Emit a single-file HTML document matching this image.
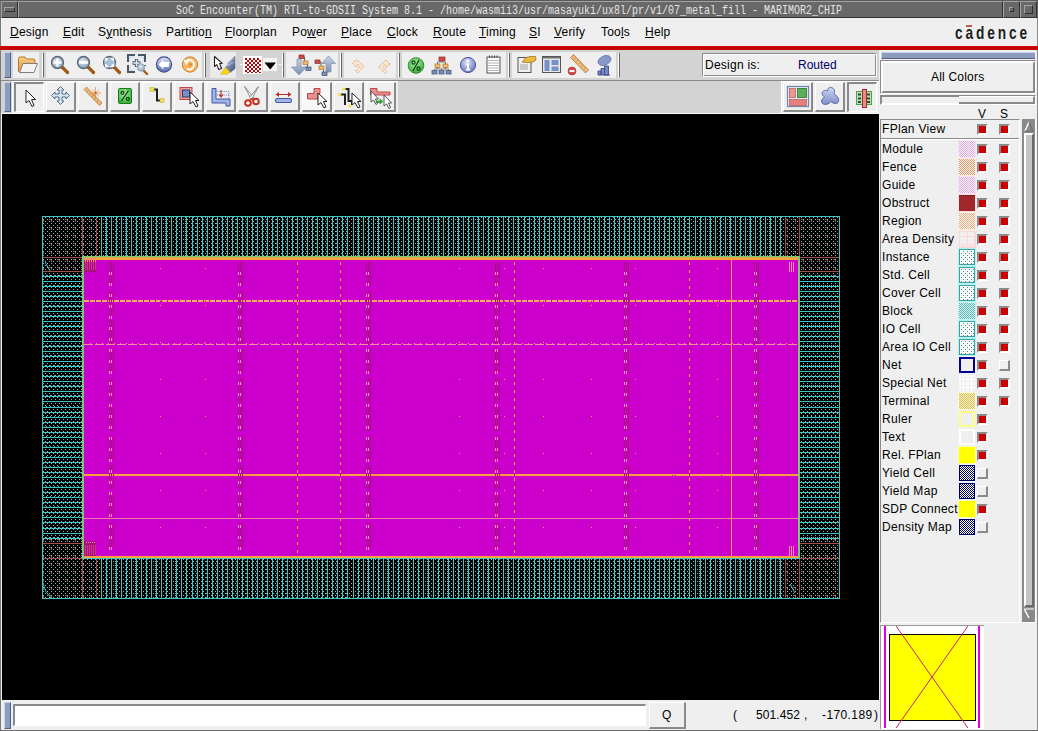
<!DOCTYPE html>
<html><head><meta charset="utf-8">
<style>
*{margin:0;padding:0;box-sizing:border-box}
html,body{width:1038px;height:731px;overflow:hidden;background:#efefef;font-family:"Liberation Sans",sans-serif;}
.a{position:absolute}
#title{left:0;top:0;width:1038px;height:18px;background:#686868;border-top:1px solid #5a5a5a;border-left:1px solid #6a6a6a;}
#ttext{left:176px;top:3px;font-family:"Liberation Mono",monospace;font-size:13px;color:#e4e4e4;white-space:pre;line-height:16px;transform:scaleX(0.7692);transform-origin:0 0}
.menu{top:25px;font-size:12px;color:#000;line-height:14px;white-space:pre;letter-spacing:0.2px}
.menu u{text-decoration:underline;text-decoration-thickness:1px;text-underline-offset:1px}
#red{left:0;top:46px;width:1038px;height:4px;background:#cc0000;border-bottom:1px solid #b80000}
.tbgray{background:#d3d3d3}
.grp{background:#efefef}
.handle{background:#8c9cbf;border-right:1px solid #55607a;border-bottom:1px solid #55607a;border-left:1px solid #c8d4ee;border-top:1px solid #c8d4ee}
.sep{width:2px;border-left:1px solid #fff;border-right:1px solid #666}
.btn{width:30px;height:30px;border-top:1px solid #fff;border-left:1px solid #fff;border-right:2px solid #8a8a8a;border-bottom:2px solid #8a8a8a;background:#efefef}
.btnp{width:30px;height:30px;border-top:2px solid #8a8a8a;border-left:2px solid #8a8a8a;border-right:1px solid #fff;border-bottom:1px solid #fff;background:#efefef}
.lst{font-size:12px;color:#000;white-space:pre;line-height:14px;letter-spacing:0.3px}
.sw{width:16px;height:15px}
.cb{width:11px;height:11px;border-top:2px solid #8a8a8a;border-left:2px solid #8a8a8a;border-right:2px solid #fff;border-bottom:2px solid #fff;background:#cc0000}
.cbo{width:11px;height:11px;border-top:1px solid #fff;border-left:1px solid #fff;border-right:2px solid #8a8a8a;border-bottom:2px solid #8a8a8a;background:#efefef}

.mod{background:repeating-conic-gradient(#f8e4f8 0 25%,#e8c4e8 0 50%) 0 0/2px 2px;box-shadow:inset 0 0 0 1px #f0d0f0}
.fen{background:repeating-conic-gradient(#f4d0b4 0 25%,#e0b090 0 50%) 0 0/2px 2px;box-shadow:inset 0 0 0 1px #f0c8a8}
.obs{background:#a0282a}
.reg{background:repeating-conic-gradient(#f8dcc4 0 25%,#e8c0a0 0 50%) 0 0/2px 2px}
.ad{background:#f4eaea;box-shadow:inset 0 0 0 1px #f0d0d0}
.inst{background:#eafafa;border:1px solid #40b4b4}
.blk{background:#a8dede;border:1px solid #60c0c0}
.net{background:#efefef;border:2px solid #000090;box-shadow:0 0 0 1px #f4f4ff}
.sn{background:#f8f8f8}
.term{background:repeating-conic-gradient(#f0e4a0 0 25%,#e0cc70 0 50%) 0 0/2px 2px}
.rul{background:#efefef;border:2px solid #ffff80}
.txt{background:#efefef;border:2px solid #fff}
.yel{background:#ffff00}
.nav{background:repeating-conic-gradient(#000070 0 25%,#e0e0ff 0 50%) 0 0/2px 2px;border:1px solid #000060}
</style></head><body>
<!-- frame -->
<div class="a" style="left:0;top:0;width:1px;height:731px;background:#7a7a7a"></div>
<div class="a" style="left:1037px;top:0;width:1px;height:731px;background:#8a8a8a"></div>
<div class="a" style="left:0;top:730px;width:1038px;height:1px;background:#6a6a6a"></div>

<!-- title bar -->
<div id="title" class="a"></div>
<div class="a" style="left:1px;top:1px;width:17px;height:17px;border-top:1px solid #a4a4a4;border-left:1px solid #a4a4a4;border-right:1px solid #303030;border-bottom:1px solid #303030"></div>
<div class="a" style="left:4px;top:7px;width:11px;height:5px;border:1px solid #a4a4a4;border-right-color:#303030;border-bottom-color:#303030"></div>
<div class="a" style="left:18px;top:1px;width:985px;height:17px;border-top:1px solid #a4a4a4;border-left:1px solid #a4a4a4;border-right:1px solid #303030;border-bottom:1px solid #303030"></div>
<div class="a" style="left:1003px;top:1px;width:17px;height:17px;border-top:1px solid #a4a4a4;border-left:1px solid #a4a4a4;border-right:1px solid #303030;border-bottom:1px solid #303030"></div>
<div class="a" style="left:1009px;top:7px;width:5px;height:5px;border:1px solid #a4a4a4;border-right-color:#303030;border-bottom-color:#303030"></div>
<div class="a" style="left:1020px;top:1px;width:17px;height:17px;border-top:1px solid #a4a4a4;border-left:1px solid #a4a4a4;border-right:1px solid #303030;border-bottom:1px solid #303030"></div>
<div class="a" style="left:1024px;top:5px;width:9px;height:9px;border:1px solid #a4a4a4;border-right-color:#303030;border-bottom-color:#303030"></div>
<div id="ttext" class="a">SoC Encounter(TM) RTL-to-GDSII System 8.1 - /home/wasmii3/usr/masayuki/ux8l/pr/v1/07_metal_fill - MARIMOR2_CHIP</div>

<!-- menu -->
<div class="a menu" style="left:10px"><u>D</u>esign</div>
<div class="a menu" style="left:63px"><u>E</u>dit</div>
<div class="a menu" style="left:98px">S<u>y</u>nthesis</div>
<div class="a menu" style="left:166px">Partitio<u>n</u></div>
<div class="a menu" style="left:225px"><u>F</u>loorplan</div>
<div class="a menu" style="left:292px">Po<u>w</u>er</div>
<div class="a menu" style="left:341px"><u>P</u>lace</div>
<div class="a menu" style="left:387px"><u>C</u>lock</div>
<div class="a menu" style="left:433px"><u>R</u>oute</div>
<div class="a menu" style="left:479px"><u>T</u>iming</div>
<div class="a menu" style="left:529px"><u>S</u>I</div>
<div class="a menu" style="left:554px"><u>V</u>erify</div>
<div class="a menu" style="left:601px">Too<u>l</u>s</div>
<div class="a menu" style="left:645px"><u>H</u>elp</div>
<div class="a" style="left:955px;top:23px;font-size:19px;font-weight:bold;color:#1e1e1e;letter-spacing:4px;line-height:20px;transform:scaleX(0.72);transform-origin:0 0;white-space:pre">cadence</div>
<div class="a" style="left:966px;top:25px;width:6px;height:2px;background:#c05858"></div>

<div id="red" class="a"></div>

<!-- toolbars -->
<div class="a tbgray" style="left:1px;top:50px;width:878px;height:64px"></div>
<div class="a" style="left:1px;top:80px;width:878px;height:1px;background:#8a8a8a"></div>
<div class="a" style="left:1px;top:113px;width:878px;height:1px;background:#fafafa"></div>
<div class="a grp" style="left:13px;top:52px;width:27px;height:26px;border-right:1px solid #d8d8d8"></div>
<div class="a grp" style="left:46px;top:52px;width:156px;height:26px"></div>
<div class="a grp" style="left:210px;top:52px;width:26px;height:26px;background:#ebebeb"></div>
<div class="a grp" style="left:286px;top:52px;width:52px;height:26px"></div>
<div class="a grp" style="left:344px;top:52px;width:52px;height:26px"></div>
<div class="a grp" style="left:402px;top:52px;width:104px;height:26px"></div>
<div class="a grp" style="left:512px;top:52px;width:104px;height:26px"></div>
<div class="a handle" style="left:4px;top:52px;width:7px;height:26px"></div>
<div class="a handle" style="left:4px;top:82px;width:7px;height:30px"></div>
<div class="a sep" style="left:42px;top:53px;height:24px"></div>
<div class="a sep" style="left:204px;top:53px;height:24px"></div>
<div class="a sep" style="left:282px;top:53px;height:24px"></div>
<div class="a sep" style="left:340px;top:53px;height:24px"></div>
<div class="a sep" style="left:398px;top:53px;height:24px"></div>
<div class="a sep" style="left:508px;top:53px;height:24px"></div>
<div class="a sep" style="left:618px;top:53px;height:24px"></div>
<!-- row2 buttons -->
<div class="a" style="left:12px;top:81px;width:386px;height:32px;background:#efefef;border-top:1px solid #fff;border-left:1px solid #fff"></div>
<div class="a" style="left:781px;top:81px;width:98px;height:32px;background:#efefef;border-top:1px solid #fff;border-left:1px solid #fff"></div>
<div class="a btnp" style="left:14px;top:82px"></div>
<div class="a btn" style="left:46px;top:82px"></div>
<div class="a btn" style="left:78px;top:82px"></div>
<div class="a btn" style="left:110px;top:82px"></div>
<div class="a btn" style="left:142px;top:82px"></div>
<div class="a btn" style="left:174px;top:82px"></div>
<div class="a btn" style="left:206px;top:82px"></div>
<div class="a btn" style="left:238px;top:82px"></div>
<div class="a btn" style="left:270px;top:82px"></div>
<div class="a btn" style="left:302px;top:82px;background:#f8f8f8"></div>
<div class="a btn" style="left:334px;top:82px"></div>
<div class="a btn" style="left:366px;top:82px"></div>
<div class="a btn" style="left:783px;top:82px"></div>
<div class="a btn" style="left:815px;top:82px"></div>
<div class="a btnp" style="left:847px;top:82px"></div>

<svg class="a" style="left:0;top:49px" width="880" height="65" viewBox="0 49 880 65">
<defs>
<linearGradient id="gfold" x1="0" y1="0" x2="0" y2="1"><stop offset="0" stop-color="#f8d088"/><stop offset="1" stop-color="#e09838"/></linearGradient>
<radialGradient id="glens" cx="0.45" cy="0.4" r="0.6"><stop offset="0" stop-color="#e8f0f8"/><stop offset="1" stop-color="#8098b0"/></radialGradient>
<linearGradient id="gblue" x1="0" y1="0" x2="0" y2="1"><stop offset="0" stop-color="#d8e0f4"/><stop offset="1" stop-color="#5870b0"/></linearGradient>
<radialGradient id="gorg" cx="0.5" cy="0.4" r="0.6"><stop offset="0" stop-color="#ffe0a8"/><stop offset="1" stop-color="#e88a20"/></radialGradient>
<radialGradient id="ggrn" cx="0.45" cy="0.35" r="0.7"><stop offset="0" stop-color="#a8f0a8"/><stop offset="1" stop-color="#30a830"/></radialGradient>
<radialGradient id="ginfo" cx="0.45" cy="0.35" r="0.65"><stop offset="0" stop-color="#e0e4f8"/><stop offset="1" stop-color="#6878c0"/></radialGradient>
<linearGradient id="garr" x1="0" y1="0" x2="0" y2="1"><stop offset="0" stop-color="#c8d4e4"/><stop offset="1" stop-color="#7890b0"/></linearGradient>
<pattern id="chk" width="4" height="4" patternUnits="userSpaceOnUse" x="245" y="58"><rect width="4" height="4" fill="#fff"/><rect width="2" height="2" fill="#c00000"/><rect x="2" y="2" width="2" height="2" fill="#c00000"/></pattern>
</defs>
<!-- folder -->
<path d="M18.5 72 L18.5 58.5 Q18.5 57 20 57 L25 57 L26.5 59 L33 59 Q35 59 35 61 L35 64" fill="url(#gfold)" stroke="#b87828" stroke-width="1"/>
<path d="M19.5 72.5 L23 63.5 L37.5 63.5 L34 72.5 Z" fill="#f4f4f4" stroke="#808080" stroke-width="1"/>
<!-- zoom in/out/fit -->
<g stroke-linecap="round">
<path d="M62 67 L67.5 72.5" stroke="#a05a18" stroke-width="3.2"/>
<circle cx="57.5" cy="62.5" r="6" fill="url(#glens)" stroke="#5a6878" stroke-width="1.3"/>
<path d="M57.5 58.5 V66.5 M53.5 62.5 H61.5" stroke="#fff" stroke-width="2.6" stroke-linecap="butt"/>
<path d="M88 67 L93.5 72.5" stroke="#a05a18" stroke-width="3.2"/>
<circle cx="83.5" cy="62.5" r="6" fill="url(#glens)" stroke="#5a6878" stroke-width="1.3"/>
<path d="M79 62.5 H88" stroke="#fff" stroke-width="2.6" stroke-linecap="butt"/>
<path d="M114 67 L119.5 72.5" stroke="#a05a18" stroke-width="3.2"/>
<circle cx="109.5" cy="62.5" r="6" fill="#a8c0d8" stroke="#5a6878" stroke-width="1.3"/>
<path d="M105.5 58.5 l2.5 0 l-2.5 2.5 Z M113.5 58.5 l0 2.5 l-2.5 -2.5 Z M105.5 66.5 l0 -2.5 l2.5 2.5 Z M113.5 66.5 l-2.5 0 l2.5 -2.5 Z" fill="#fff" stroke="#fff" stroke-width="1"/>
</g>
<!-- zoom select -->
<path d="M128 62 V55 H135 M138 55 H145 V62 M128 65 V72 H135 M145 65 V66" fill="none" stroke="#485868" stroke-width="2"/>
<path d="M130 62 V57 H135 M138 57 H143 V62 M130 65 V70 H135" fill="none" stroke="#c8d8f0" stroke-width="1"/>
<path d="M136.5 59 V67 M132.5 63 H140.5" stroke="#485868" stroke-width="3.4"/>
<path d="M136.5 59.8 V66.2 M133.3 63 H139.7" stroke="#e8f0f8" stroke-width="1.4"/>
<path d="M143 70 L147 74" stroke="#a05a18" stroke-width="2.4" stroke-linecap="round"/>
<circle cx="141" cy="67.5" r="3.8" fill="url(#glens)" stroke="#90a8c0" stroke-width="0.6"/>
<!-- back -->
<circle cx="164" cy="64.5" r="7.6" fill="url(#gblue)" stroke="#40508a" stroke-width="1.2"/>
<path d="M158.5 64.5 L163.5 59.5 V62 H169 V67 H163.5 V69.5 Z" fill="#fff"/>
<!-- refresh -->
<circle cx="190" cy="64.5" r="7.6" fill="#f4b060" stroke="#d07820" stroke-width="1"/>
<circle cx="190" cy="64.5" r="6.2" fill="none" stroke="#f8c880" stroke-width="1"/>
<path d="M186.5 61 A4.6 4.6 0 1 1 186.8 68.5" fill="none" stroke="#fff8e8" stroke-width="2"/>
<path d="M183.5 59.5 L189.5 61 L186 65.5 Z" fill="#fff8e8"/>
<circle cx="190.5" cy="64.5" r="1.5" fill="#e09038"/>
<!-- select+pen group -->
<linearGradient id="gpen" x1="0" y1="0" x2="1" y2="1"><stop offset="0" stop-color="#b0c0e8"/><stop offset="1" stop-color="#404c78"/></linearGradient>
<path d="M214.5 56.5 L214.5 66.5 L216.8 64.6 L218.8 69.6 L221.6 68.5 L219.6 63.6 L222.3 63.3 Z" fill="#fff" stroke="#222" stroke-width="1.1" stroke-linejoin="round"/>
<path d="M234.8 56.3 L235 68.6 L230.3 72.3 L225.3 67.6 L228.3 64.3 L228 63.3 Z" fill="url(#gpen)" stroke="#4a5680" stroke-width="0.6"/><path d="M228.5 63.5 L234.5 57 M227 66 L234 62" stroke="#d0dcf8" stroke-width="0.7"/>
<path d="M225.3 67.6 L230.3 72.3 L226.8 74.2 L220.3 74.3 Z" fill="#f4d418" stroke="#d8a810" stroke-width="0.5"/>
<rect x="240" y="64" width="2" height="1" fill="#fff"/><rect x="279" y="64" width="2" height="1" fill="#fff"/>
<rect x="243" y="56" width="19" height="18" fill="#fff"/>
<rect x="245" y="58" width="16" height="15" fill="url(#chk)"/>
<rect x="263" y="58" width="14" height="13" fill="#f4f4f4"/>
<path d="M264.5 62.5 H276 L270.2 69.5 Z" fill="#000"/>
<!-- push down / up -->
<path d="M297 59 H301 V67 H306.5 L299 75 L291.5 67 H297 Z" fill="url(#garr)" stroke="#8898b0" stroke-width="0.8"/>
<path d="M301.5 57 H304.5 V62.5 H307.5 V68 H309" fill="none" stroke="#505860" stroke-width="0.9"/>
<rect x="299" y="55" width="5" height="3.5" fill="#d04848" stroke="#903030" stroke-width="0.7"/>
<rect x="303" y="61" width="5" height="3.5" fill="#f4b868" stroke="#a87838" stroke-width="0.7"/>
<rect x="306" y="67" width="5" height="3.5" fill="#7890b8" stroke="#405070" stroke-width="0.7"/>
<path d="M326 72 V63.5 H321.5 L328.5 56 L335.5 63.5 H331 V72 Z" fill="url(#garr)" stroke="#8898b0" stroke-width="0.8"/>
<path d="M319 62 H321 V67.5 H323.5 V74" fill="none" stroke="#505860" stroke-width="0.9"/>
<rect x="315" y="60" width="5" height="3.5" fill="#d04848" stroke="#903030" stroke-width="0.7"/>
<rect x="319" y="66" width="5" height="3.5" fill="#f4b868" stroke="#a87838" stroke-width="0.7"/>
<rect x="322" y="72" width="5" height="3.5" fill="#7890b8" stroke="#405070" stroke-width="0.7"/>
<!-- undo redo disabled -->
<pattern id="stip" width="2" height="2" patternUnits="userSpaceOnUse"><rect width="2" height="2" fill="#fbe4c8"/><rect width="1" height="1" fill="#c89868"/></pattern>
<path d="M352.5 63.5 L356.5 59.5 L364 66.5 L357.5 73 L355.5 71 L360 66.5 L357.5 64 L356.5 67.5 Z" fill="#fde6cc" stroke="#c89060" stroke-width="0.9" stroke-dasharray="1 1"/>
<path d="M390 64 L386 60 L378.5 67 L385 73.5 L387 71.5 L382.5 67 L385 64.5 L386 68 Z" fill="#fde6cc" stroke="#c89060" stroke-width="0.9" stroke-dasharray="1 1"/>
<!-- green percent -->
<circle cx="416" cy="65.5" r="7.8" fill="url(#ggrn)" stroke="#1a7a1a" stroke-width="0.8"/>
<circle cx="413.5" cy="62.5" r="1.6" fill="none" stroke="#104010" stroke-width="1.2"/>
<circle cx="418.5" cy="68.5" r="1.6" fill="none" stroke="#104010" stroke-width="1.2"/>
<path d="M419 60 L413 71" stroke="#104010" stroke-width="1.3"/>
<!-- hierarchy -->
<path d="M442 59 V62 H437.5 V65 M442 62 H445.5 V65 M437.5 67 V69 H434.5 V71 M437.5 69 H441.5 V71 M445.5 67 V69 H448.5 V71 M445.5 69 H441.5" fill="none" stroke="#707070" stroke-width="0.9"/>
<rect x="439" y="57" width="6" height="4" fill="#d04848" stroke="#903030" stroke-width="0.7"/>
<rect x="435" y="64" width="5" height="3.5" fill="#f4b868" stroke="#a87838" stroke-width="0.7"/>
<rect x="443" y="64" width="5" height="3.5" fill="#f4b868" stroke="#a87838" stroke-width="0.7"/>
<rect x="432" y="70.5" width="5" height="3.5" fill="#7890b8" stroke="#405070" stroke-width="0.7"/>
<rect x="439" y="70.5" width="5" height="3.5" fill="#7890b8" stroke="#405070" stroke-width="0.7"/>
<rect x="446" y="70.5" width="5" height="3.5" fill="#7890b8" stroke="#405070" stroke-width="0.7"/>
<!-- info -->
<circle cx="468" cy="65" r="7.6" fill="url(#ginfo)" stroke="#4858a0" stroke-width="1"/>
<circle cx="468" cy="60.8" r="1.3" fill="#fff"/>
<path d="M466 63.5 H469 V69 H470.3 V70.5 H465.8 V69 H467 V65 H466 Z" fill="#fff"/>
<!-- notepad -->
<rect x="487" y="57" width="13" height="16" fill="#fff" stroke="#555" stroke-width="1"/>
<path d="M488 60.5 H499 M488 63 H499 M488 65.5 H499 M488 68 H499 M488 70.5 H499" stroke="#a0a0a0" stroke-width="0.8"/>
<path d="M489.5 55.5 V58 M492 55.5 V58 M494.5 55.5 V58 M497 55.5 V58" stroke="#555" stroke-width="1"/>
<!-- doc edit -->
<rect x="518" y="57.5" width="13" height="15" fill="#f0f0f0" stroke="#555" stroke-width="1"/>
<path d="M520 65 H528 M520 67 H528 M520 69 H528" stroke="#909090" stroke-width="0.8"/>
<path d="M522 62 L526 57.5 L530 56.5 L535.5 56.5 L536 60 L533 62 L527 62.5 Z" fill="#e8b840" stroke="#a87818" stroke-width="0.8"/>
<!-- layout window -->
<rect x="542.5" y="56.5" width="18" height="16" fill="#e8e8e8" stroke="#555" stroke-width="1"/>
<rect x="543" y="57" width="17" height="1.5" fill="#707070"/>
<rect x="544.5" y="60" width="5" height="11" fill="#7890c8"/>
<rect x="551.5" y="60" width="7" height="5" fill="#7890c8"/>
<rect x="551.5" y="66.5" width="7" height="4.5" fill="#7890c8"/>
<!-- ruler remove -->
<path d="M570.5 57.5 L573.5 54.5 L588.5 70 L585.5 73 Z" fill="#e8b878" stroke="#b87838" stroke-width="0.8"/>
<path d="M574 59 L575.5 57.5 M576.5 61.5 L578 60 M579 64 L580.5 62.5 M581.5 66.5 L583 65 M584 69 L585.5 67.5" stroke="#b87838" stroke-width="0.7"/>
<circle cx="572" cy="71" r="4" fill="#d04848" stroke="#a83030" stroke-width="0.6"/>
<rect x="569.5" y="70" width="5" height="2" fill="#fff"/>
<!-- blob chart -->
<ellipse cx="604.5" cy="60.5" rx="6.8" ry="4.5" transform="rotate(-25 604.5 60.5)" fill="#8898c8" stroke="#6070a8" stroke-width="0.8"/>
<path d="M598 75 V71 H601 V75 M601 75 V68.5 H604.5 V75 M604.5 75 V66 H608.5 V75 Z" fill="#7888c0" stroke="#405090" stroke-width="0.9"/>
<rect x="598" y="74.5" width="12" height="1" fill="#405090"/>

<!-- ROW 2 -->
<path d="M26 90 L26 103 L29 100.5 L32 106.5 L34 105.5 L31.5 99.5 L35.5 99.5 Z" fill="#fff" stroke="#222" stroke-width="1" stroke-linejoin="round"/>
<!-- move -->
<path d="M60.5 86.5 L64 90 H62 V94 H66 V92 L69.5 95.5 L66 99 V97 H62 V101 H64 L60.5 104.5 L57 101 H59 V97 H55 V99 L51.5 95.5 L55 92 V94 H59 V90 H57 Z" fill="#d8e4f0" stroke="#50708e" stroke-width="1"/>
<!-- ruler sparkle -->
<path d="M84 89.5 L86.5 87 L102 103 L99.5 105.5 Z" fill="#e8b878" stroke="#c08040" stroke-width="0.8"/>
<path d="M87 92 L88.5 90.5 M89.5 94.5 L91 93 M92 97 L93.5 95.5 M94.5 99.5 L96 98 M97 102 L98.5 100.5" stroke="#c08040" stroke-width="0.7"/>
<path d="M95.5 87 V98 M90.5 93 H101 M92 89.5 L99 96.5 M99 89.5 L92 96.5" stroke="#e07020" stroke-width="0.6"/>
<circle cx="95.5" cy="93" r="1.3" fill="#e07020"/>
<!-- green % -->
<rect x="118.5" y="88.5" width="13" height="15" rx="1.2" fill="url(#ggrn)" stroke="#1a7a1a" stroke-width="1"/>
<circle cx="122.5" cy="92.8" r="1.5" fill="none" stroke="#104010" stroke-width="1.2"/>
<circle cx="127.8" cy="98.8" r="1.5" fill="none" stroke="#104010" stroke-width="1.2"/>
<path d="M128.5 90.5 L121.5 101" stroke="#104010" stroke-width="1.3"/>
<!-- wire -->
<path d="M152 89.5 H157 V100.5 H162" fill="none" stroke="#202020" stroke-width="2"/>
<rect x="150" y="87.5" width="4" height="4" fill="#f0e060" stroke="#c8b830" stroke-width="0.6"/>
<rect x="160" y="98.5" width="4" height="4" fill="#f0e060" stroke="#c8b830" stroke-width="0.6"/>
<!-- box select -->
<rect x="180" y="87.5" width="12" height="12" fill="#f0a0a0" stroke="#c04848" stroke-width="1"/>
<rect x="182.5" y="90" width="7" height="7" fill="#7890c8" stroke="#303868" stroke-width="1"/>
<path d="M190 92 L190 104 L193 101.5 L196 107 L198 106 L195.5 100.5 L199 100.5 Z" fill="#fff" stroke="#222" stroke-width="1" stroke-linejoin="round"/>
<!-- floorplan icon -->
<path d="M212 88.5 H216 V99 H230 V106 H226 V103 H212 Z" fill="#a0b4e8" stroke="#4058a0" stroke-width="1"/>
<path d="M217 91.5 H229 V99 M217 95 H229" fill="none" stroke="#6078b8" stroke-width="0.8" stroke-dasharray="1.2 1"/>
<path d="M221 90 V96 M219 94.5 L221 97 L223 94.5" fill="none" stroke="#c03030" stroke-width="1.2"/>
<!-- scissors -->
<path d="M244.5 86.5 L253.5 97.5 L251.5 99.5 Z" fill="#fff" stroke="#808080" stroke-width="0.9" stroke-linejoin="round"/>
<path d="M258.5 86.5 L249.5 97.5 L251.5 99.5 Z" fill="#fff" stroke="#808080" stroke-width="0.9" stroke-linejoin="round"/>
<circle cx="248" cy="103" r="2.8" fill="#fff" stroke="#c83020" stroke-width="2"/>
<circle cx="256" cy="101.5" r="2.8" fill="#fff" stroke="#c83020" stroke-width="2"/>
<path d="M250 100.5 L252 98.5 M254 100 L252 98.5" stroke="#c83020" stroke-width="1.6"/>
<!-- stretch -->
<path d="M278 94.5 H289" stroke="#b03030" stroke-width="1"/><path d="M279 92 L275.5 94.5 L279 97 Z M288 92 L291.5 94.5 L288 97 Z" fill="#b03030"/>
<rect x="275.5" y="98.5" width="16" height="4" rx="1.5" fill="#a0b4e8" stroke="#4058a0" stroke-width="1"/>
<!-- red L + cursor -->
<path d="M314 88.5 H320 V93.5 H318 V99 H307.5 V93.5 H314 Z" fill="#e89090" stroke="#c04848" stroke-width="1"/>
<path d="M318 93 L318 105 L321 102.5 L324 108 L326 107 L323.5 101.5 L327 101.5 Z" fill="#fff" stroke="#222" stroke-width="1" stroke-linejoin="round"/>
<!-- wire select -->
<path d="M344.5 89 H348.5 V101 H352 V105" fill="none" stroke="#202020" stroke-width="2"/>
<path d="M340.5 94.5 H345 V105" fill="none" stroke="#202020" stroke-width="2"/>
<circle cx="344" cy="89" r="1.8" fill="#f0e060"/><circle cx="339.5" cy="94.5" r="1.8" fill="#f0e060"/><circle cx="350" cy="106" r="1.8" fill="#f0e060"/>
<path d="M352 93 L352 105 L355 102.5 L358 108 L360 107 L357.5 101.5 L361 101.5 Z" fill="#fff" stroke="#222" stroke-width="1" stroke-linejoin="round"/>
<!-- copy select -->
<path d="M370.5 88.5 H377 V92 H390 V95 H370.5 Z" fill="#e89090" stroke="#c04848" stroke-width="1"/>
<path d="M371 91 L371 102 L373.5 100 L376 104.5 L377.5 103.5 L375.5 99 L378.5 99 Z" fill="#fff" stroke="#444" stroke-width="0.9" stroke-linejoin="round"/>
<path d="M384 95 L384 106 L386.5 104 L389 108.5 L390.5 107.5 L388.5 103 L391.5 103 Z" fill="#fff" stroke="#444" stroke-width="0.9" stroke-linejoin="round"/>
<path d="M376 101 H380 V99 L383 101.5 L380 104 V102.5 H376 Z" fill="#30b030" stroke="#208020" stroke-width="0.5"/>
<!-- right buttons -->
<rect x="787.5" y="86.5" width="21" height="20" fill="#e8eef8" stroke="#7088b0" stroke-width="1.2"/>
<rect x="789.5" y="88.5" width="6" height="9" fill="#e89898" stroke="#c06060" stroke-width="0.8"/>
<rect x="797.5" y="88.5" width="9" height="9" fill="#58b058" stroke="#307030" stroke-width="0.8"/>
<rect x="789.5" y="99.5" width="17" height="6" fill="#e88080" stroke="#c06060" stroke-width="0.8"/>
<linearGradient id="gblob" x1="0" y1="0" x2="0" y2="1"><stop offset="0" stop-color="#d0d8f4"/><stop offset="1" stop-color="#7c8cc8"/></linearGradient>
<path d="M830.5 87.5 C834 87.5 835.5 90.5 834 93.5 C836 95.5 839.5 98 838.5 101.5 C837.5 104.5 833.5 104 831 101.5 C829 104 825 105.5 822.5 103.5 C820.5 101.5 822 98.5 824.5 97 C822 95.5 821 92.5 823.5 91 C825 90 826.5 90.5 827.5 91 C827.5 89 828.5 87.5 830.5 87.5 Z" fill="url(#gblob)" stroke="#5a6aa8" stroke-width="1"/>
<rect x="856.5" y="91.5" width="15" height="13" fill="#b8e0b8" stroke="#50a050" stroke-width="1"/>
<rect x="858" y="93.5" width="3" height="2" fill="#305030"/><rect x="858" y="97.5" width="3" height="2" fill="#305030"/><rect x="858" y="101" width="3" height="2" fill="#305030"/>
<rect x="867" y="93.5" width="3" height="2" fill="#305030"/><rect x="867" y="97.5" width="3" height="2" fill="#305030"/><rect x="867" y="101" width="3" height="2" fill="#305030"/>
<rect x="862.5" y="89.5" width="4" height="18" fill="#f08888" stroke="#a03030" stroke-width="1"/>
</svg>

<!-- design is -->
<div class="a" style="left:702px;top:53px;width:175px;height:24px;border-top:1px solid #8a8a8a;border-left:1px solid #8a8a8a;border-right:1px solid #fff;border-bottom:1px solid #fff;box-shadow:inset 1px 1px 0 #fff,inset -1px -1px 0 #8a8a8a;background:#efefef"></div>
<div class="a" style="left:705px;top:58px;font-size:12px;line-height:14px;letter-spacing:0.25px">Design is:</div>
<div class="a" style="left:798px;top:58px;font-size:12px;line-height:14px;color:#000068">Routed</div>

<!-- canvas -->
<svg class="a" style="left:2px;top:114px" width="877" height="586" viewBox="2 114 877 586" shape-rendering="crispEdges">
<defs>
<pattern id="dots" width="4" height="4" patternUnits="userSpaceOnUse"><rect x="1" y="1" width="1" height="1" fill="#90b8bc"/><rect x="3" y="3" width="1" height="1" fill="#90b8bc"/></pattern>
<pattern id="bmk" width="8" height="8" patternUnits="userSpaceOnUse"><rect x="1" y="3" width="2" height="1" fill="#8a5a50"/><rect x="3" y="4" width="1" height="2" fill="#8a5a50"/></pattern>
<pattern id="vio" width="10" height="4" patternUnits="userSpaceOnUse"><rect x="1" y="0" width="1" height="4" fill="#40c4c4"/><rect x="6" y="0" width="1" height="4" fill="#40c4c4"/><rect x="5" y="3" width="1" height="1" fill="#40c4c4"/></pattern>
<pattern id="hio" width="4" height="10" patternUnits="userSpaceOnUse"><rect x="0" y="1" width="4" height="1" fill="#40c4c4"/><rect x="0" y="6" width="4" height="1" fill="#40c4c4"/><rect x="3" y="5" width="1" height="1" fill="#40c4c4"/></pattern>
</defs>
<rect x="2" y="114" width="877" height="586" fill="#000"/>
<rect x="42" y="216" width="798" height="383" fill="url(#dots)"/>
<rect x="42" y="216" width="55" height="60" fill="url(#bmk)"/>
<rect x="785" y="216" width="55" height="60" fill="url(#bmk)"/>
<rect x="42" y="538" width="55" height="61" fill="url(#bmk)"/>
<rect x="785" y="538" width="55" height="61" fill="url(#bmk)"/>
<path d="M105.5 219V256M105.5 561V598" stroke="#40c4c4" stroke-dasharray="1 3"/>
<path d="M115.5 219V256M115.5 561V598" stroke="#40c4c4" stroke-dasharray="1 3"/>
<path d="M125.5 219V256M125.5 561V598" stroke="#40c4c4" stroke-dasharray="1 3"/>
<path d="M135.5 219V256M135.5 561V598" stroke="#40c4c4" stroke-dasharray="1 3"/>
<path d="M145.5 219V256M145.5 561V598" stroke="#40c4c4" stroke-dasharray="1 3"/>
<path d="M155.5 219V256M155.5 561V598" stroke="#40c4c4" stroke-dasharray="1 3"/>
<path d="M165.5 219V256M165.5 561V598" stroke="#40c4c4" stroke-dasharray="1 3"/>
<path d="M175.5 219V256M175.5 561V598" stroke="#40c4c4" stroke-dasharray="1 3"/>
<path d="M185.5 219V256M185.5 561V598" stroke="#40c4c4" stroke-dasharray="1 3"/>
<path d="M196.5 219V256M196.5 561V598" stroke="#40c4c4" stroke-dasharray="1 3"/>
<path d="M206.5 219V256M206.5 561V598" stroke="#40c4c4" stroke-dasharray="1 3"/>
<path d="M216.5 219V256M216.5 561V598" stroke="#40c4c4" stroke-dasharray="1 3"/>
<path d="M226.5 219V256M226.5 561V598" stroke="#40c4c4" stroke-dasharray="1 3"/>
<path d="M236.5 219V256M236.5 561V598" stroke="#40c4c4" stroke-dasharray="1 3"/>
<path d="M246.5 219V256M246.5 561V598" stroke="#40c4c4" stroke-dasharray="1 3"/>
<path d="M256.5 219V256M256.5 561V598" stroke="#40c4c4" stroke-dasharray="1 3"/>
<path d="M266.5 219V256M266.5 561V598" stroke="#40c4c4" stroke-dasharray="1 3"/>
<path d="M276.5 219V256M276.5 561V598" stroke="#40c4c4" stroke-dasharray="1 3"/>
<path d="M286.5 219V256M286.5 561V598" stroke="#40c4c4" stroke-dasharray="1 3"/>
<path d="M296.5 219V256M296.5 561V598" stroke="#40c4c4" stroke-dasharray="1 3"/>
<path d="M306.5 219V256M306.5 561V598" stroke="#40c4c4" stroke-dasharray="1 3"/>
<path d="M316.5 219V256M316.5 561V598" stroke="#40c4c4" stroke-dasharray="1 3"/>
<path d="M326.5 219V256M326.5 561V598" stroke="#40c4c4" stroke-dasharray="1 3"/>
<path d="M336.5 219V256M336.5 561V598" stroke="#40c4c4" stroke-dasharray="1 3"/>
<path d="M346.5 219V256M346.5 561V598" stroke="#40c4c4" stroke-dasharray="1 3"/>
<path d="M357.5 219V256M357.5 561V598" stroke="#40c4c4" stroke-dasharray="1 3"/>
<path d="M367.5 219V256M367.5 561V598" stroke="#40c4c4" stroke-dasharray="1 3"/>
<path d="M377.5 219V256M377.5 561V598" stroke="#40c4c4" stroke-dasharray="1 3"/>
<path d="M387.5 219V256M387.5 561V598" stroke="#40c4c4" stroke-dasharray="1 3"/>
<path d="M397.5 219V256M397.5 561V598" stroke="#40c4c4" stroke-dasharray="1 3"/>
<path d="M407.5 219V256M407.5 561V598" stroke="#40c4c4" stroke-dasharray="1 3"/>
<path d="M417.5 219V256M417.5 561V598" stroke="#40c4c4" stroke-dasharray="1 3"/>
<path d="M427.5 219V256M427.5 561V598" stroke="#40c4c4" stroke-dasharray="1 3"/>
<path d="M437.5 219V256M437.5 561V598" stroke="#40c4c4" stroke-dasharray="1 3"/>
<path d="M447.5 219V256M447.5 561V598" stroke="#40c4c4" stroke-dasharray="1 3"/>
<path d="M457.5 219V256M457.5 561V598" stroke="#40c4c4" stroke-dasharray="1 3"/>
<path d="M467.5 219V256M467.5 561V598" stroke="#40c4c4" stroke-dasharray="1 3"/>
<path d="M477.5 219V256M477.5 561V598" stroke="#40c4c4" stroke-dasharray="1 3"/>
<path d="M487.5 219V256M487.5 561V598" stroke="#40c4c4" stroke-dasharray="1 3"/>
<path d="M497.5 219V256M497.5 561V598" stroke="#40c4c4" stroke-dasharray="1 3"/>
<path d="M507.5 219V256M507.5 561V598" stroke="#40c4c4" stroke-dasharray="1 3"/>
<path d="M517.5 219V256M517.5 561V598" stroke="#40c4c4" stroke-dasharray="1 3"/>
<path d="M528.5 219V256M528.5 561V598" stroke="#40c4c4" stroke-dasharray="1 3"/>
<path d="M538.5 219V256M538.5 561V598" stroke="#40c4c4" stroke-dasharray="1 3"/>
<path d="M548.5 219V256M548.5 561V598" stroke="#40c4c4" stroke-dasharray="1 3"/>
<path d="M558.5 219V256M558.5 561V598" stroke="#40c4c4" stroke-dasharray="1 3"/>
<path d="M568.5 219V256M568.5 561V598" stroke="#40c4c4" stroke-dasharray="1 3"/>
<path d="M578.5 219V256M578.5 561V598" stroke="#40c4c4" stroke-dasharray="1 3"/>
<path d="M588.5 219V256M588.5 561V598" stroke="#40c4c4" stroke-dasharray="1 3"/>
<path d="M598.5 219V256M598.5 561V598" stroke="#40c4c4" stroke-dasharray="1 3"/>
<path d="M608.5 219V256M608.5 561V598" stroke="#40c4c4" stroke-dasharray="1 3"/>
<path d="M618.5 219V256M618.5 561V598" stroke="#40c4c4" stroke-dasharray="1 3"/>
<path d="M628.5 219V256M628.5 561V598" stroke="#40c4c4" stroke-dasharray="1 3"/>
<path d="M638.5 219V256M638.5 561V598" stroke="#40c4c4" stroke-dasharray="1 3"/>
<path d="M648.5 219V256M648.5 561V598" stroke="#40c4c4" stroke-dasharray="1 3"/>
<path d="M658.5 219V256M658.5 561V598" stroke="#40c4c4" stroke-dasharray="1 3"/>
<path d="M668.5 219V256M668.5 561V598" stroke="#40c4c4" stroke-dasharray="1 3"/>
<path d="M678.5 219V256M678.5 561V598" stroke="#40c4c4" stroke-dasharray="1 3"/>
<path d="M688.5 219V256M688.5 561V598" stroke="#40c4c4" stroke-dasharray="1 3"/>
<path d="M699.5 219V256M699.5 561V598" stroke="#40c4c4" stroke-dasharray="1 3"/>
<path d="M709.5 219V256M709.5 561V598" stroke="#40c4c4" stroke-dasharray="1 3"/>
<path d="M719.5 219V256M719.5 561V598" stroke="#40c4c4" stroke-dasharray="1 3"/>
<path d="M729.5 219V256M729.5 561V598" stroke="#40c4c4" stroke-dasharray="1 3"/>
<path d="M739.5 219V256M739.5 561V598" stroke="#40c4c4" stroke-dasharray="1 3"/>
<path d="M749.5 219V256M749.5 561V598" stroke="#40c4c4" stroke-dasharray="1 3"/>
<path d="M759.5 219V256M759.5 561V598" stroke="#40c4c4" stroke-dasharray="1 3"/>
<path d="M769.5 219V256M769.5 561V598" stroke="#40c4c4" stroke-dasharray="1 3"/>
<path d="M779.5 219V256M779.5 561V598" stroke="#40c4c4" stroke-dasharray="1 3"/>
<path d="M101 217h1V256h-1z M101 559h1V598h-1z M111 217h1V256h-1z M111 559h1V598h-1z M121 217h1V256h-1z M121 559h1V598h-1z M131 217h1V256h-1z M131 559h1V598h-1z M141 217h1V256h-1z M141 559h1V598h-1z M151 217h1V256h-1z M151 559h1V598h-1z M161 217h1V256h-1z M161 559h1V598h-1z M171 217h1V256h-1z M171 559h1V598h-1z M181 217h1V256h-1z M181 559h1V598h-1z M192 217h1V256h-1z M192 559h1V598h-1z M202 217h1V256h-1z M202 559h1V598h-1z M212 217h1V256h-1z M212 559h1V598h-1z M222 217h1V256h-1z M222 559h1V598h-1z M232 217h1V256h-1z M232 559h1V598h-1z M242 217h1V256h-1z M242 559h1V598h-1z M252 217h1V256h-1z M252 559h1V598h-1z M262 217h1V256h-1z M262 559h1V598h-1z M272 217h1V256h-1z M272 559h1V598h-1z M282 217h1V256h-1z M282 559h1V598h-1z M292 217h1V256h-1z M292 559h1V598h-1z M302 217h1V256h-1z M302 559h1V598h-1z M312 217h1V256h-1z M312 559h1V598h-1z M322 217h1V256h-1z M322 559h1V598h-1z M332 217h1V256h-1z M332 559h1V598h-1z M342 217h1V256h-1z M342 559h1V598h-1z M353 217h1V256h-1z M353 559h1V598h-1z M363 217h1V256h-1z M363 559h1V598h-1z M373 217h1V256h-1z M373 559h1V598h-1z M383 217h1V256h-1z M383 559h1V598h-1z M393 217h1V256h-1z M393 559h1V598h-1z M403 217h1V256h-1z M403 559h1V598h-1z M413 217h1V256h-1z M413 559h1V598h-1z M423 217h1V256h-1z M423 559h1V598h-1z M433 217h1V256h-1z M433 559h1V598h-1z M443 217h1V256h-1z M443 559h1V598h-1z M453 217h1V256h-1z M453 559h1V598h-1z M463 217h1V256h-1z M463 559h1V598h-1z M473 217h1V256h-1z M473 559h1V598h-1z M483 217h1V256h-1z M483 559h1V598h-1z M493 217h1V256h-1z M493 559h1V598h-1z M503 217h1V256h-1z M503 559h1V598h-1z M513 217h1V256h-1z M513 559h1V598h-1z M524 217h1V256h-1z M524 559h1V598h-1z M534 217h1V256h-1z M534 559h1V598h-1z M544 217h1V256h-1z M544 559h1V598h-1z M554 217h1V256h-1z M554 559h1V598h-1z M564 217h1V256h-1z M564 559h1V598h-1z M574 217h1V256h-1z M574 559h1V598h-1z M584 217h1V256h-1z M584 559h1V598h-1z M594 217h1V256h-1z M594 559h1V598h-1z M604 217h1V256h-1z M604 559h1V598h-1z M614 217h1V256h-1z M614 559h1V598h-1z M624 217h1V256h-1z M624 559h1V598h-1z M634 217h1V256h-1z M634 559h1V598h-1z M644 217h1V256h-1z M644 559h1V598h-1z M654 217h1V256h-1z M654 559h1V598h-1z M664 217h1V256h-1z M664 559h1V598h-1z M674 217h1V256h-1z M674 559h1V598h-1z M684 217h1V256h-1z M684 559h1V598h-1z M695 217h1V256h-1z M695 559h1V598h-1z M705 217h1V256h-1z M705 559h1V598h-1z M715 217h1V256h-1z M715 559h1V598h-1z M725 217h1V256h-1z M725 559h1V598h-1z M735 217h1V256h-1z M735 559h1V598h-1z M745 217h1V256h-1z M745 559h1V598h-1z M755 217h1V256h-1z M755 559h1V598h-1z M765 217h1V256h-1z M765 559h1V598h-1z M775 217h1V256h-1z M775 559h1V598h-1z M106 217h1V256h-1z M106 559h1V598h-1z M116 217h1V256h-1z M116 559h1V598h-1z M126 217h1V256h-1z M126 559h1V598h-1z M136 217h1V256h-1z M136 559h1V598h-1z M146 217h1V256h-1z M146 559h1V598h-1z M156 217h1V256h-1z M156 559h1V598h-1z M166 217h1V256h-1z M166 559h1V598h-1z M176 217h1V256h-1z M176 559h1V598h-1z M186 217h1V256h-1z M186 559h1V598h-1z M197 217h1V256h-1z M197 559h1V598h-1z M207 217h1V256h-1z M207 559h1V598h-1z M217 217h1V256h-1z M217 559h1V598h-1z M227 217h1V256h-1z M227 559h1V598h-1z M237 217h1V256h-1z M237 559h1V598h-1z M247 217h1V256h-1z M247 559h1V598h-1z M257 217h1V256h-1z M257 559h1V598h-1z M267 217h1V256h-1z M267 559h1V598h-1z M277 217h1V256h-1z M277 559h1V598h-1z M287 217h1V256h-1z M287 559h1V598h-1z M297 217h1V256h-1z M297 559h1V598h-1z M307 217h1V256h-1z M307 559h1V598h-1z M317 217h1V256h-1z M317 559h1V598h-1z M327 217h1V256h-1z M327 559h1V598h-1z M337 217h1V256h-1z M337 559h1V598h-1z M347 217h1V256h-1z M347 559h1V598h-1z M358 217h1V256h-1z M358 559h1V598h-1z M368 217h1V256h-1z M368 559h1V598h-1z M378 217h1V256h-1z M378 559h1V598h-1z M388 217h1V256h-1z M388 559h1V598h-1z M398 217h1V256h-1z M398 559h1V598h-1z M408 217h1V256h-1z M408 559h1V598h-1z M418 217h1V256h-1z M418 559h1V598h-1z M428 217h1V256h-1z M428 559h1V598h-1z M438 217h1V256h-1z M438 559h1V598h-1z M448 217h1V256h-1z M448 559h1V598h-1z M458 217h1V256h-1z M458 559h1V598h-1z M468 217h1V256h-1z M468 559h1V598h-1z M478 217h1V256h-1z M478 559h1V598h-1z M488 217h1V256h-1z M488 559h1V598h-1z M498 217h1V256h-1z M498 559h1V598h-1z M508 217h1V256h-1z M508 559h1V598h-1z M518 217h1V256h-1z M518 559h1V598h-1z M529 217h1V256h-1z M529 559h1V598h-1z M539 217h1V256h-1z M539 559h1V598h-1z M549 217h1V256h-1z M549 559h1V598h-1z M559 217h1V256h-1z M559 559h1V598h-1z M569 217h1V256h-1z M569 559h1V598h-1z M579 217h1V256h-1z M579 559h1V598h-1z M589 217h1V256h-1z M589 559h1V598h-1z M599 217h1V256h-1z M599 559h1V598h-1z M609 217h1V256h-1z M609 559h1V598h-1z M619 217h1V256h-1z M619 559h1V598h-1z M629 217h1V256h-1z M629 559h1V598h-1z M639 217h1V256h-1z M639 559h1V598h-1z M649 217h1V256h-1z M649 559h1V598h-1z M659 217h1V256h-1z M659 559h1V598h-1z M669 217h1V256h-1z M669 559h1V598h-1z M679 217h1V256h-1z M679 559h1V598h-1z M689 217h1V256h-1z M689 559h1V598h-1z M700 217h1V256h-1z M700 559h1V598h-1z M710 217h1V256h-1z M710 559h1V598h-1z M720 217h1V256h-1z M720 559h1V598h-1z M730 217h1V256h-1z M730 559h1V598h-1z M740 217h1V256h-1z M740 559h1V598h-1z M750 217h1V256h-1z M750 559h1V598h-1z M760 217h1V256h-1z M760 559h1V598h-1z M770 217h1V256h-1z M770 559h1V598h-1z M780 217h1V256h-1z M780 559h1V598h-1z" fill="#40c4c4"/>
<path d="M46 275.5H82M803 275.5H839" stroke="#40c4c4" stroke-dasharray="1 3"/>
<path d="M46 285.5H82M803 285.5H839" stroke="#40c4c4" stroke-dasharray="1 3"/>
<path d="M46 295.5H82M803 295.5H839" stroke="#40c4c4" stroke-dasharray="1 3"/>
<path d="M46 305.5H82M803 305.5H839" stroke="#40c4c4" stroke-dasharray="1 3"/>
<path d="M46 315.5H82M803 315.5H839" stroke="#40c4c4" stroke-dasharray="1 3"/>
<path d="M46 325.5H82M803 325.5H839" stroke="#40c4c4" stroke-dasharray="1 3"/>
<path d="M46 335.5H82M803 335.5H839" stroke="#40c4c4" stroke-dasharray="1 3"/>
<path d="M46 345.5H82M803 345.5H839" stroke="#40c4c4" stroke-dasharray="1 3"/>
<path d="M46 355.5H82M803 355.5H839" stroke="#40c4c4" stroke-dasharray="1 3"/>
<path d="M46 365.5H82M803 365.5H839" stroke="#40c4c4" stroke-dasharray="1 3"/>
<path d="M46 375.5H82M803 375.5H839" stroke="#40c4c4" stroke-dasharray="1 3"/>
<path d="M46 385.5H82M803 385.5H839" stroke="#40c4c4" stroke-dasharray="1 3"/>
<path d="M46 395.5H82M803 395.5H839" stroke="#40c4c4" stroke-dasharray="1 3"/>
<path d="M46 406.5H82M803 406.5H839" stroke="#40c4c4" stroke-dasharray="1 3"/>
<path d="M46 416.5H82M803 416.5H839" stroke="#40c4c4" stroke-dasharray="1 3"/>
<path d="M46 426.5H82M803 426.5H839" stroke="#40c4c4" stroke-dasharray="1 3"/>
<path d="M46 436.5H82M803 436.5H839" stroke="#40c4c4" stroke-dasharray="1 3"/>
<path d="M46 446.5H82M803 446.5H839" stroke="#40c4c4" stroke-dasharray="1 3"/>
<path d="M46 456.5H82M803 456.5H839" stroke="#40c4c4" stroke-dasharray="1 3"/>
<path d="M46 466.5H82M803 466.5H839" stroke="#40c4c4" stroke-dasharray="1 3"/>
<path d="M46 476.5H82M803 476.5H839" stroke="#40c4c4" stroke-dasharray="1 3"/>
<path d="M46 486.5H82M803 486.5H839" stroke="#40c4c4" stroke-dasharray="1 3"/>
<path d="M46 496.5H82M803 496.5H839" stroke="#40c4c4" stroke-dasharray="1 3"/>
<path d="M46 506.5H82M803 506.5H839" stroke="#40c4c4" stroke-dasharray="1 3"/>
<path d="M46 516.5H82M803 516.5H839" stroke="#40c4c4" stroke-dasharray="1 3"/>
<path d="M46 527.5H82M803 527.5H839" stroke="#40c4c4" stroke-dasharray="1 3"/>
<path d="M46 537.5H82M803 537.5H839" stroke="#40c4c4" stroke-dasharray="1 3"/>
<path d="M43 276h39v1h-39z M800 276h39v1h-39z M43 281h39v1h-39z M800 281h39v1h-39z M43 286h39v1h-39z M800 286h39v1h-39z M43 291h39v1h-39z M800 291h39v1h-39z M43 296h39v1h-39z M800 296h39v1h-39z M43 301h39v1h-39z M800 301h39v1h-39z M43 306h39v1h-39z M800 306h39v1h-39z M43 311h39v1h-39z M800 311h39v1h-39z M43 316h39v1h-39z M800 316h39v1h-39z M43 321h39v1h-39z M800 321h39v1h-39z M43 326h39v1h-39z M800 326h39v1h-39z M43 331h39v1h-39z M800 331h39v1h-39z M43 336h39v1h-39z M800 336h39v1h-39z M43 341h39v1h-39z M800 341h39v1h-39z M43 346h39v1h-39z M800 346h39v1h-39z M43 351h39v1h-39z M800 351h39v1h-39z M43 356h39v1h-39z M800 356h39v1h-39z M43 361h39v1h-39z M800 361h39v1h-39z M43 366h39v1h-39z M800 366h39v1h-39z M43 371h39v1h-39z M800 371h39v1h-39z M43 376h39v1h-39z M800 376h39v1h-39z M43 381h39v1h-39z M800 381h39v1h-39z M43 386h39v1h-39z M800 386h39v1h-39z M43 391h39v1h-39z M800 391h39v1h-39z M43 396h39v1h-39z M800 396h39v1h-39z M43 401h39v1h-39z M800 401h39v1h-39z M43 407h39v1h-39z M800 407h39v1h-39z M43 412h39v1h-39z M800 412h39v1h-39z M43 417h39v1h-39z M800 417h39v1h-39z M43 422h39v1h-39z M800 422h39v1h-39z M43 427h39v1h-39z M800 427h39v1h-39z M43 432h39v1h-39z M800 432h39v1h-39z M43 437h39v1h-39z M800 437h39v1h-39z M43 442h39v1h-39z M800 442h39v1h-39z M43 447h39v1h-39z M800 447h39v1h-39z M43 452h39v1h-39z M800 452h39v1h-39z M43 457h39v1h-39z M800 457h39v1h-39z M43 462h39v1h-39z M800 462h39v1h-39z M43 467h39v1h-39z M800 467h39v1h-39z M43 472h39v1h-39z M800 472h39v1h-39z M43 477h39v1h-39z M800 477h39v1h-39z M43 482h39v1h-39z M800 482h39v1h-39z M43 487h39v1h-39z M800 487h39v1h-39z M43 492h39v1h-39z M800 492h39v1h-39z M43 497h39v1h-39z M800 497h39v1h-39z M43 502h39v1h-39z M800 502h39v1h-39z M43 507h39v1h-39z M800 507h39v1h-39z M43 512h39v1h-39z M800 512h39v1h-39z M43 517h39v1h-39z M800 517h39v1h-39z M43 522h39v1h-39z M800 522h39v1h-39z M43 528h39v1h-39z M800 528h39v1h-39z M43 533h39v1h-39z M800 533h39v1h-39z M43 538h39v1h-39z M800 538h39v1h-39z" fill="#40c4c4"/>
<rect x="82" y="216" width="1" height="41" fill="#a05048"/>
<rect x="82" y="558" width="1" height="40" fill="#a05048"/>
<rect x="96" y="216" width="1" height="41" fill="#a05048"/>
<rect x="96" y="558" width="1" height="40" fill="#a05048"/>
<rect x="785" y="216" width="1" height="41" fill="#a05048"/>
<rect x="785" y="558" width="1" height="40" fill="#a05048"/>
<rect x="799" y="216" width="1" height="41" fill="#a05048"/>
<rect x="799" y="558" width="1" height="40" fill="#a05048"/>
<rect x="42" y="257" width="41" height="1" fill="#a05048"/>
<rect x="799" y="257" width="40" height="1" fill="#a05048"/>
<rect x="42" y="271" width="41" height="1" fill="#a05048"/>
<rect x="799" y="271" width="40" height="1" fill="#a05048"/>
<rect x="42" y="543" width="41" height="1" fill="#a05048"/>
<rect x="799" y="543" width="40" height="1" fill="#a05048"/>
<rect x="42" y="558" width="41" height="1" fill="#a05048"/>
<rect x="799" y="558" width="40" height="1" fill="#a05048"/>
<rect x="42" y="216" width="798" height="1" fill="#40c4c4"/>
<rect x="42" y="598" width="798" height="1" fill="#40c4c4"/>
<rect x="42" y="216" width="1" height="383" fill="#40c4c4"/>
<rect x="839" y="216" width="1" height="383" fill="#40c4c4"/>
<path d="M45 262 L50 271" stroke="#40c4c4" stroke-width="1" shape-rendering="auto"/>
<path d="M43 584 Q45 592 51 598" fill="none" stroke="#40c4c4" stroke-width="1" shape-rendering="auto"/>
<path d="M790 584 L795 593" stroke="#40c4c4" stroke-width="1" shape-rendering="auto"/>
<rect x="82" y="256" width="718" height="303" fill="#78c878"/>
<rect x="84" y="257" width="714" height="3" fill="#ffa040"/>
<rect x="84" y="257" width="714" height="1" fill="#d0b040"/>
<rect x="84" y="556" width="714" height="2" fill="#ffa040"/>
<rect x="84" y="558" width="714" height="1" fill="#40c4c4"/>
<rect x="84" y="260" width="714" height="296" fill="#cc00cc"/>
<rect x="84" y="260" width="12" height="12" fill="#a8107c"/>
<rect x="84" y="541" width="12" height="15" fill="#a8107c"/>
<rect x="85" y="258" width="1" height="6" fill="#ff8080"/>
<rect x="85" y="262" width="1" height="8" fill="#d03090"/>
<rect x="87" y="258" width="1" height="6" fill="#ff8080"/>
<rect x="87" y="262" width="1" height="8" fill="#d03090"/>
<rect x="89" y="258" width="1" height="6" fill="#ff8080"/>
<rect x="89" y="262" width="1" height="8" fill="#d03090"/>
<rect x="91" y="258" width="1" height="6" fill="#ff8080"/>
<rect x="91" y="262" width="1" height="8" fill="#d03090"/>
<rect x="93" y="258" width="1" height="6" fill="#ff8080"/>
<rect x="93" y="262" width="1" height="8" fill="#d03090"/>
<rect x="95" y="258" width="1" height="6" fill="#ff8080"/>
<rect x="95" y="262" width="1" height="8" fill="#d03090"/>
<rect x="84" y="300" width="5" height="2" fill="#ffa860"/>
<rect x="90" y="300" width="5" height="2" fill="#ffa860"/>
<rect x="96" y="300" width="5" height="2" fill="#ffa860"/>
<rect x="102" y="300" width="5" height="2" fill="#ffa860"/>
<rect x="108" y="300" width="5" height="2" fill="#ffa860"/>
<rect x="114" y="300" width="5" height="2" fill="#ffa860"/>
<rect x="120" y="300" width="5" height="2" fill="#ffa860"/>
<rect x="126" y="300" width="5" height="2" fill="#ffa860"/>
<rect x="132" y="300" width="5" height="2" fill="#ffa860"/>
<rect x="138" y="300" width="5" height="2" fill="#ffa860"/>
<rect x="144" y="300" width="5" height="2" fill="#ffa860"/>
<rect x="150" y="300" width="5" height="2" fill="#ffa860"/>
<rect x="156" y="300" width="5" height="2" fill="#ffa860"/>
<rect x="162" y="300" width="5" height="2" fill="#ffa860"/>
<rect x="168" y="300" width="5" height="2" fill="#ffa860"/>
<rect x="174" y="300" width="5" height="2" fill="#ffa860"/>
<rect x="180" y="300" width="5" height="2" fill="#ffa860"/>
<rect x="186" y="300" width="5" height="2" fill="#ffa860"/>
<rect x="192" y="300" width="5" height="2" fill="#ffa860"/>
<rect x="198" y="300" width="5" height="2" fill="#ffa860"/>
<rect x="204" y="300" width="5" height="2" fill="#ffa860"/>
<rect x="210" y="300" width="5" height="2" fill="#ffa860"/>
<rect x="216" y="300" width="5" height="2" fill="#ffa860"/>
<rect x="222" y="300" width="5" height="2" fill="#ffa860"/>
<rect x="228" y="300" width="5" height="2" fill="#ffa860"/>
<rect x="234" y="300" width="5" height="2" fill="#ffa860"/>
<rect x="240" y="300" width="5" height="2" fill="#ffa860"/>
<rect x="246" y="300" width="5" height="2" fill="#ffa860"/>
<rect x="252" y="300" width="5" height="2" fill="#ffa860"/>
<rect x="258" y="300" width="5" height="2" fill="#ffa860"/>
<rect x="264" y="300" width="5" height="2" fill="#ffa860"/>
<rect x="270" y="300" width="5" height="2" fill="#ffa860"/>
<rect x="276" y="300" width="5" height="2" fill="#ffa860"/>
<rect x="282" y="300" width="5" height="2" fill="#ffa860"/>
<rect x="288" y="300" width="5" height="2" fill="#ffa860"/>
<rect x="294" y="300" width="5" height="2" fill="#ffa860"/>
<rect x="300" y="300" width="5" height="2" fill="#ffa860"/>
<rect x="306" y="300" width="5" height="2" fill="#ffa860"/>
<rect x="312" y="300" width="5" height="2" fill="#ffa860"/>
<rect x="318" y="300" width="5" height="2" fill="#ffa860"/>
<rect x="324" y="300" width="5" height="2" fill="#ffa860"/>
<rect x="330" y="300" width="5" height="2" fill="#ffa860"/>
<rect x="336" y="300" width="5" height="2" fill="#ffa860"/>
<rect x="342" y="300" width="5" height="2" fill="#ffa860"/>
<rect x="348" y="300" width="5" height="2" fill="#ffa860"/>
<rect x="354" y="300" width="5" height="2" fill="#ffa860"/>
<rect x="360" y="300" width="5" height="2" fill="#ffa860"/>
<rect x="366" y="300" width="5" height="2" fill="#ffa860"/>
<rect x="372" y="300" width="5" height="2" fill="#ffa860"/>
<rect x="378" y="300" width="5" height="2" fill="#ffa860"/>
<rect x="384" y="300" width="5" height="2" fill="#ffa860"/>
<rect x="390" y="300" width="5" height="2" fill="#ffa860"/>
<rect x="396" y="300" width="5" height="2" fill="#ffa860"/>
<rect x="402" y="300" width="5" height="2" fill="#ffa860"/>
<rect x="408" y="300" width="5" height="2" fill="#ffa860"/>
<rect x="414" y="300" width="5" height="2" fill="#ffa860"/>
<rect x="420" y="300" width="5" height="2" fill="#ffa860"/>
<rect x="426" y="300" width="5" height="2" fill="#ffa860"/>
<rect x="432" y="300" width="5" height="2" fill="#ffa860"/>
<rect x="438" y="300" width="5" height="2" fill="#ffa860"/>
<rect x="444" y="300" width="5" height="2" fill="#ffa860"/>
<rect x="450" y="300" width="5" height="2" fill="#ffa860"/>
<rect x="456" y="300" width="5" height="2" fill="#ffa860"/>
<rect x="462" y="300" width="5" height="2" fill="#ffa860"/>
<rect x="468" y="300" width="5" height="2" fill="#ffa860"/>
<rect x="474" y="300" width="5" height="2" fill="#ffa860"/>
<rect x="480" y="300" width="5" height="2" fill="#ffa860"/>
<rect x="486" y="300" width="5" height="2" fill="#ffa860"/>
<rect x="492" y="300" width="5" height="2" fill="#ffa860"/>
<rect x="498" y="300" width="5" height="2" fill="#ffa860"/>
<rect x="504" y="300" width="5" height="2" fill="#ffa860"/>
<rect x="510" y="300" width="5" height="2" fill="#ffa860"/>
<rect x="516" y="300" width="5" height="2" fill="#ffa860"/>
<rect x="522" y="300" width="5" height="2" fill="#ffa860"/>
<rect x="528" y="300" width="5" height="2" fill="#ffa860"/>
<rect x="534" y="300" width="5" height="2" fill="#ffa860"/>
<rect x="540" y="300" width="5" height="2" fill="#ffa860"/>
<rect x="546" y="300" width="5" height="2" fill="#ffa860"/>
<rect x="552" y="300" width="5" height="2" fill="#ffa860"/>
<rect x="558" y="300" width="5" height="2" fill="#ffa860"/>
<rect x="564" y="300" width="5" height="2" fill="#ffa860"/>
<rect x="570" y="300" width="5" height="2" fill="#ffa860"/>
<rect x="576" y="300" width="5" height="2" fill="#ffa860"/>
<rect x="582" y="300" width="5" height="2" fill="#ffa860"/>
<rect x="588" y="300" width="5" height="2" fill="#ffa860"/>
<rect x="594" y="300" width="5" height="2" fill="#ffa860"/>
<rect x="600" y="300" width="5" height="2" fill="#ffa860"/>
<rect x="606" y="300" width="5" height="2" fill="#ffa860"/>
<rect x="612" y="300" width="5" height="2" fill="#ffa860"/>
<rect x="618" y="300" width="5" height="2" fill="#ffa860"/>
<rect x="624" y="300" width="5" height="2" fill="#ffa860"/>
<rect x="630" y="300" width="5" height="2" fill="#ffa860"/>
<rect x="636" y="300" width="5" height="2" fill="#ffa860"/>
<rect x="642" y="300" width="5" height="2" fill="#ffa860"/>
<rect x="648" y="300" width="5" height="2" fill="#ffa860"/>
<rect x="654" y="300" width="5" height="2" fill="#ffa860"/>
<rect x="660" y="300" width="5" height="2" fill="#ffa860"/>
<rect x="666" y="300" width="5" height="2" fill="#ffa860"/>
<rect x="672" y="300" width="5" height="2" fill="#ffa860"/>
<rect x="678" y="300" width="5" height="2" fill="#ffa860"/>
<rect x="684" y="300" width="5" height="2" fill="#ffa860"/>
<rect x="690" y="300" width="5" height="2" fill="#ffa860"/>
<rect x="696" y="300" width="5" height="2" fill="#ffa860"/>
<rect x="702" y="300" width="5" height="2" fill="#ffa860"/>
<rect x="708" y="300" width="5" height="2" fill="#ffa860"/>
<rect x="714" y="300" width="5" height="2" fill="#ffa860"/>
<rect x="720" y="300" width="5" height="2" fill="#ffa860"/>
<rect x="726" y="300" width="5" height="2" fill="#ffa860"/>
<rect x="732" y="300" width="5" height="2" fill="#ffa860"/>
<rect x="738" y="300" width="5" height="2" fill="#ffa860"/>
<rect x="744" y="300" width="5" height="2" fill="#ffa860"/>
<rect x="750" y="300" width="5" height="2" fill="#ffa860"/>
<rect x="756" y="300" width="5" height="2" fill="#ffa860"/>
<rect x="762" y="300" width="5" height="2" fill="#ffa860"/>
<rect x="768" y="300" width="5" height="2" fill="#ffa860"/>
<rect x="774" y="300" width="5" height="2" fill="#ffa860"/>
<rect x="780" y="300" width="5" height="2" fill="#ffa860"/>
<rect x="786" y="300" width="5" height="2" fill="#ffa860"/>
<rect x="792" y="300" width="5" height="2" fill="#ffa860"/>
<rect x="84" y="344" width="9" height="1" fill="#ff90a0"/>
<rect x="95" y="344" width="9" height="1" fill="#ff90a0"/>
<rect x="106" y="344" width="9" height="1" fill="#ff90a0"/>
<rect x="117" y="344" width="9" height="1" fill="#ff90a0"/>
<rect x="128" y="344" width="9" height="1" fill="#ff90a0"/>
<rect x="139" y="344" width="9" height="1" fill="#ff90a0"/>
<rect x="150" y="344" width="9" height="1" fill="#ff90a0"/>
<rect x="161" y="344" width="9" height="1" fill="#ff90a0"/>
<rect x="172" y="344" width="9" height="1" fill="#ff90a0"/>
<rect x="183" y="344" width="9" height="1" fill="#ff90a0"/>
<rect x="194" y="344" width="9" height="1" fill="#ff90a0"/>
<rect x="205" y="344" width="9" height="1" fill="#ff90a0"/>
<rect x="216" y="344" width="9" height="1" fill="#ff90a0"/>
<rect x="227" y="344" width="9" height="1" fill="#ff90a0"/>
<rect x="238" y="344" width="9" height="1" fill="#ff90a0"/>
<rect x="249" y="344" width="9" height="1" fill="#ff90a0"/>
<rect x="260" y="344" width="9" height="1" fill="#ff90a0"/>
<rect x="271" y="344" width="9" height="1" fill="#ff90a0"/>
<rect x="282" y="344" width="9" height="1" fill="#ff90a0"/>
<rect x="293" y="344" width="9" height="1" fill="#ff90a0"/>
<rect x="304" y="344" width="9" height="1" fill="#ff90a0"/>
<rect x="315" y="344" width="9" height="1" fill="#ff90a0"/>
<rect x="326" y="344" width="9" height="1" fill="#ff90a0"/>
<rect x="337" y="344" width="9" height="1" fill="#ff90a0"/>
<rect x="348" y="344" width="9" height="1" fill="#ff90a0"/>
<rect x="359" y="344" width="9" height="1" fill="#ff90a0"/>
<rect x="370" y="344" width="9" height="1" fill="#ff90a0"/>
<rect x="381" y="344" width="9" height="1" fill="#ff90a0"/>
<rect x="392" y="344" width="9" height="1" fill="#ff90a0"/>
<rect x="403" y="344" width="9" height="1" fill="#ff90a0"/>
<rect x="414" y="344" width="9" height="1" fill="#ff90a0"/>
<rect x="425" y="344" width="9" height="1" fill="#ff90a0"/>
<rect x="436" y="344" width="9" height="1" fill="#ff90a0"/>
<rect x="447" y="344" width="9" height="1" fill="#ff90a0"/>
<rect x="458" y="344" width="9" height="1" fill="#ff90a0"/>
<rect x="469" y="344" width="9" height="1" fill="#ff90a0"/>
<rect x="480" y="344" width="9" height="1" fill="#ff90a0"/>
<rect x="491" y="344" width="9" height="1" fill="#ff90a0"/>
<rect x="502" y="344" width="9" height="1" fill="#ff90a0"/>
<rect x="513" y="344" width="9" height="1" fill="#ff90a0"/>
<rect x="524" y="344" width="9" height="1" fill="#ff90a0"/>
<rect x="535" y="344" width="9" height="1" fill="#ff90a0"/>
<rect x="546" y="344" width="9" height="1" fill="#ff90a0"/>
<rect x="557" y="344" width="9" height="1" fill="#ff90a0"/>
<rect x="568" y="344" width="9" height="1" fill="#ff90a0"/>
<rect x="579" y="344" width="9" height="1" fill="#ff90a0"/>
<rect x="590" y="344" width="9" height="1" fill="#ff90a0"/>
<rect x="601" y="344" width="9" height="1" fill="#ff90a0"/>
<rect x="612" y="344" width="9" height="1" fill="#ff90a0"/>
<rect x="623" y="344" width="9" height="1" fill="#ff90a0"/>
<rect x="634" y="344" width="9" height="1" fill="#ff90a0"/>
<rect x="645" y="344" width="9" height="1" fill="#ff90a0"/>
<rect x="656" y="344" width="9" height="1" fill="#ff90a0"/>
<rect x="667" y="344" width="9" height="1" fill="#ff90a0"/>
<rect x="678" y="344" width="9" height="1" fill="#ff90a0"/>
<rect x="689" y="344" width="9" height="1" fill="#ff90a0"/>
<rect x="700" y="344" width="9" height="1" fill="#ff90a0"/>
<rect x="711" y="344" width="9" height="1" fill="#ff90a0"/>
<rect x="722" y="344" width="9" height="1" fill="#ff90a0"/>
<rect x="733" y="344" width="9" height="1" fill="#ff90a0"/>
<rect x="744" y="344" width="9" height="1" fill="#ff90a0"/>
<rect x="755" y="344" width="9" height="1" fill="#ff90a0"/>
<rect x="766" y="344" width="9" height="1" fill="#ff90a0"/>
<rect x="777" y="344" width="9" height="1" fill="#ff90a0"/>
<rect x="788" y="344" width="9" height="1" fill="#ff90a0"/>
<rect x="90" y="343" width="1" height="1" fill="#ff90a0"/>
<rect x="96" y="343" width="1" height="1" fill="#ff90a0"/>
<rect x="102" y="343" width="1" height="1" fill="#ff90a0"/>
<rect x="108" y="343" width="1" height="1" fill="#ff90a0"/>
<rect x="114" y="343" width="1" height="1" fill="#ff90a0"/>
<rect x="120" y="343" width="1" height="1" fill="#ff90a0"/>
<rect x="126" y="343" width="1" height="1" fill="#ff90a0"/>
<rect x="132" y="343" width="1" height="1" fill="#ff90a0"/>
<rect x="138" y="343" width="1" height="1" fill="#ff90a0"/>
<rect x="144" y="343" width="1" height="1" fill="#ff90a0"/>
<rect x="150" y="343" width="1" height="1" fill="#ff90a0"/>
<rect x="156" y="343" width="1" height="1" fill="#ff90a0"/>
<rect x="162" y="343" width="1" height="1" fill="#ff90a0"/>
<rect x="168" y="343" width="1" height="1" fill="#ff90a0"/>
<rect x="174" y="343" width="1" height="1" fill="#ff90a0"/>
<rect x="180" y="343" width="1" height="1" fill="#ff90a0"/>
<rect x="186" y="343" width="1" height="1" fill="#ff90a0"/>
<rect x="192" y="343" width="1" height="1" fill="#ff90a0"/>
<rect x="198" y="343" width="1" height="1" fill="#ff90a0"/>
<rect x="204" y="343" width="1" height="1" fill="#ff90a0"/>
<rect x="210" y="343" width="1" height="1" fill="#ff90a0"/>
<rect x="216" y="343" width="1" height="1" fill="#ff90a0"/>
<rect x="222" y="343" width="1" height="1" fill="#ff90a0"/>
<rect x="228" y="343" width="1" height="1" fill="#ff90a0"/>
<rect x="234" y="343" width="1" height="1" fill="#ff90a0"/>
<rect x="240" y="343" width="1" height="1" fill="#ff90a0"/>
<rect x="246" y="343" width="1" height="1" fill="#ff90a0"/>
<rect x="252" y="343" width="1" height="1" fill="#ff90a0"/>
<rect x="258" y="343" width="1" height="1" fill="#ff90a0"/>
<rect x="264" y="343" width="1" height="1" fill="#ff90a0"/>
<rect x="270" y="343" width="1" height="1" fill="#ff90a0"/>
<rect x="276" y="343" width="1" height="1" fill="#ff90a0"/>
<rect x="282" y="343" width="1" height="1" fill="#ff90a0"/>
<rect x="288" y="343" width="1" height="1" fill="#ff90a0"/>
<rect x="294" y="343" width="1" height="1" fill="#ff90a0"/>
<rect x="300" y="343" width="1" height="1" fill="#ff90a0"/>
<rect x="306" y="343" width="1" height="1" fill="#ff90a0"/>
<rect x="312" y="343" width="1" height="1" fill="#ff90a0"/>
<rect x="318" y="343" width="1" height="1" fill="#ff90a0"/>
<rect x="324" y="343" width="1" height="1" fill="#ff90a0"/>
<rect x="330" y="343" width="1" height="1" fill="#ff90a0"/>
<rect x="336" y="343" width="1" height="1" fill="#ff90a0"/>
<rect x="342" y="343" width="1" height="1" fill="#ff90a0"/>
<rect x="348" y="343" width="1" height="1" fill="#ff90a0"/>
<rect x="354" y="343" width="1" height="1" fill="#ff90a0"/>
<rect x="360" y="343" width="1" height="1" fill="#ff90a0"/>
<rect x="366" y="343" width="1" height="1" fill="#ff90a0"/>
<rect x="372" y="343" width="1" height="1" fill="#ff90a0"/>
<rect x="378" y="343" width="1" height="1" fill="#ff90a0"/>
<rect x="384" y="343" width="1" height="1" fill="#ff90a0"/>
<rect x="390" y="343" width="1" height="1" fill="#ff90a0"/>
<rect x="396" y="343" width="1" height="1" fill="#ff90a0"/>
<rect x="402" y="343" width="1" height="1" fill="#ff90a0"/>
<rect x="408" y="343" width="1" height="1" fill="#ff90a0"/>
<rect x="414" y="343" width="1" height="1" fill="#ff90a0"/>
<rect x="420" y="343" width="1" height="1" fill="#ff90a0"/>
<rect x="426" y="343" width="1" height="1" fill="#ff90a0"/>
<rect x="432" y="343" width="1" height="1" fill="#ff90a0"/>
<rect x="438" y="343" width="1" height="1" fill="#ff90a0"/>
<rect x="444" y="343" width="1" height="1" fill="#ff90a0"/>
<rect x="450" y="343" width="1" height="1" fill="#ff90a0"/>
<rect x="456" y="343" width="1" height="1" fill="#ff90a0"/>
<rect x="462" y="343" width="1" height="1" fill="#ff90a0"/>
<rect x="468" y="343" width="1" height="1" fill="#ff90a0"/>
<rect x="474" y="343" width="1" height="1" fill="#ff90a0"/>
<rect x="480" y="343" width="1" height="1" fill="#ff90a0"/>
<rect x="486" y="343" width="1" height="1" fill="#ff90a0"/>
<rect x="492" y="343" width="1" height="1" fill="#ff90a0"/>
<rect x="498" y="343" width="1" height="1" fill="#ff90a0"/>
<rect x="504" y="343" width="1" height="1" fill="#ff90a0"/>
<rect x="510" y="343" width="1" height="1" fill="#ff90a0"/>
<rect x="516" y="343" width="1" height="1" fill="#ff90a0"/>
<rect x="522" y="343" width="1" height="1" fill="#ff90a0"/>
<rect x="528" y="343" width="1" height="1" fill="#ff90a0"/>
<rect x="534" y="343" width="1" height="1" fill="#ff90a0"/>
<rect x="540" y="343" width="1" height="1" fill="#ff90a0"/>
<rect x="546" y="343" width="1" height="1" fill="#ff90a0"/>
<rect x="552" y="343" width="1" height="1" fill="#ff90a0"/>
<rect x="558" y="343" width="1" height="1" fill="#ff90a0"/>
<rect x="564" y="343" width="1" height="1" fill="#ff90a0"/>
<rect x="570" y="343" width="1" height="1" fill="#ff90a0"/>
<rect x="576" y="343" width="1" height="1" fill="#ff90a0"/>
<rect x="582" y="343" width="1" height="1" fill="#ff90a0"/>
<rect x="588" y="343" width="1" height="1" fill="#ff90a0"/>
<rect x="594" y="343" width="1" height="1" fill="#ff90a0"/>
<rect x="600" y="343" width="1" height="1" fill="#ff90a0"/>
<rect x="606" y="343" width="1" height="1" fill="#ff90a0"/>
<rect x="612" y="343" width="1" height="1" fill="#ff90a0"/>
<rect x="618" y="343" width="1" height="1" fill="#ff90a0"/>
<rect x="624" y="343" width="1" height="1" fill="#ff90a0"/>
<rect x="630" y="343" width="1" height="1" fill="#ff90a0"/>
<rect x="636" y="343" width="1" height="1" fill="#ff90a0"/>
<rect x="642" y="343" width="1" height="1" fill="#ff90a0"/>
<rect x="648" y="343" width="1" height="1" fill="#ff90a0"/>
<rect x="654" y="343" width="1" height="1" fill="#ff90a0"/>
<rect x="660" y="343" width="1" height="1" fill="#ff90a0"/>
<rect x="666" y="343" width="1" height="1" fill="#ff90a0"/>
<rect x="672" y="343" width="1" height="1" fill="#ff90a0"/>
<rect x="678" y="343" width="1" height="1" fill="#ff90a0"/>
<rect x="684" y="343" width="1" height="1" fill="#ff90a0"/>
<rect x="690" y="343" width="1" height="1" fill="#ff90a0"/>
<rect x="696" y="343" width="1" height="1" fill="#ff90a0"/>
<rect x="702" y="343" width="1" height="1" fill="#ff90a0"/>
<rect x="708" y="343" width="1" height="1" fill="#ff90a0"/>
<rect x="714" y="343" width="1" height="1" fill="#ff90a0"/>
<rect x="720" y="343" width="1" height="1" fill="#ff90a0"/>
<rect x="726" y="343" width="1" height="1" fill="#ff90a0"/>
<rect x="732" y="343" width="1" height="1" fill="#ff90a0"/>
<rect x="738" y="343" width="1" height="1" fill="#ff90a0"/>
<rect x="744" y="343" width="1" height="1" fill="#ff90a0"/>
<rect x="750" y="343" width="1" height="1" fill="#ff90a0"/>
<rect x="756" y="343" width="1" height="1" fill="#ff90a0"/>
<rect x="762" y="343" width="1" height="1" fill="#ff90a0"/>
<rect x="768" y="343" width="1" height="1" fill="#ff90a0"/>
<rect x="774" y="343" width="1" height="1" fill="#ff90a0"/>
<rect x="780" y="343" width="1" height="1" fill="#ff90a0"/>
<rect x="786" y="343" width="1" height="1" fill="#ff90a0"/>
<rect x="792" y="343" width="1" height="1" fill="#ff90a0"/>
<rect x="84" y="474" width="714" height="2" fill="#ffa040"/>
<rect x="84" y="518" width="714" height="1" fill="#ff80a0"/>
<rect x="109" y="262" width="1" height="24" fill="#a8107c"/>
<rect x="111" y="262" width="1" height="24" fill="#a8107c"/>
<rect x="113" y="262" width="1" height="24" fill="#a8107c"/>
<rect x="109" y="291" width="1" height="24" fill="#a8107c"/>
<rect x="111" y="291" width="1" height="24" fill="#a8107c"/>
<rect x="113" y="291" width="1" height="24" fill="#a8107c"/>
<rect x="109" y="320" width="1" height="24" fill="#a8107c"/>
<rect x="111" y="320" width="1" height="24" fill="#a8107c"/>
<rect x="113" y="320" width="1" height="24" fill="#a8107c"/>
<rect x="109" y="349" width="1" height="24" fill="#a8107c"/>
<rect x="111" y="349" width="1" height="24" fill="#a8107c"/>
<rect x="113" y="349" width="1" height="24" fill="#a8107c"/>
<rect x="109" y="378" width="1" height="24" fill="#a8107c"/>
<rect x="111" y="378" width="1" height="24" fill="#a8107c"/>
<rect x="113" y="378" width="1" height="24" fill="#a8107c"/>
<rect x="109" y="407" width="1" height="24" fill="#a8107c"/>
<rect x="111" y="407" width="1" height="24" fill="#a8107c"/>
<rect x="113" y="407" width="1" height="24" fill="#a8107c"/>
<rect x="109" y="436" width="1" height="24" fill="#a8107c"/>
<rect x="111" y="436" width="1" height="24" fill="#a8107c"/>
<rect x="113" y="436" width="1" height="24" fill="#a8107c"/>
<rect x="109" y="465" width="1" height="24" fill="#a8107c"/>
<rect x="111" y="465" width="1" height="24" fill="#a8107c"/>
<rect x="113" y="465" width="1" height="24" fill="#a8107c"/>
<rect x="109" y="494" width="1" height="24" fill="#a8107c"/>
<rect x="111" y="494" width="1" height="24" fill="#a8107c"/>
<rect x="113" y="494" width="1" height="24" fill="#a8107c"/>
<rect x="109" y="523" width="1" height="24" fill="#a8107c"/>
<rect x="111" y="523" width="1" height="24" fill="#a8107c"/>
<rect x="113" y="523" width="1" height="24" fill="#a8107c"/>
<rect x="109" y="272" width="1" height="3" fill="#ff90b0"/>
<rect x="111" y="272" width="1" height="3" fill="#ff90b0"/>
<rect x="109" y="283" width="1" height="3" fill="#ff90b0"/>
<rect x="111" y="283" width="1" height="3" fill="#ff90b0"/>
<rect x="109" y="294" width="1" height="3" fill="#ff90b0"/>
<rect x="111" y="294" width="1" height="3" fill="#ff90b0"/>
<rect x="109" y="305" width="1" height="3" fill="#ff90b0"/>
<rect x="111" y="305" width="1" height="3" fill="#ff90b0"/>
<rect x="109" y="316" width="1" height="3" fill="#ff90b0"/>
<rect x="111" y="316" width="1" height="3" fill="#ff90b0"/>
<rect x="109" y="327" width="1" height="3" fill="#ff90b0"/>
<rect x="111" y="327" width="1" height="3" fill="#ff90b0"/>
<rect x="109" y="338" width="1" height="3" fill="#ff90b0"/>
<rect x="111" y="338" width="1" height="3" fill="#ff90b0"/>
<rect x="109" y="349" width="1" height="3" fill="#ff90b0"/>
<rect x="111" y="349" width="1" height="3" fill="#ff90b0"/>
<rect x="109" y="360" width="1" height="3" fill="#ff90b0"/>
<rect x="111" y="360" width="1" height="3" fill="#ff90b0"/>
<rect x="109" y="371" width="1" height="3" fill="#ff90b0"/>
<rect x="111" y="371" width="1" height="3" fill="#ff90b0"/>
<rect x="109" y="382" width="1" height="3" fill="#ff90b0"/>
<rect x="111" y="382" width="1" height="3" fill="#ff90b0"/>
<rect x="109" y="393" width="1" height="3" fill="#ff90b0"/>
<rect x="111" y="393" width="1" height="3" fill="#ff90b0"/>
<rect x="109" y="404" width="1" height="3" fill="#ff90b0"/>
<rect x="111" y="404" width="1" height="3" fill="#ff90b0"/>
<rect x="109" y="415" width="1" height="3" fill="#ff90b0"/>
<rect x="111" y="415" width="1" height="3" fill="#ff90b0"/>
<rect x="109" y="426" width="1" height="3" fill="#ff90b0"/>
<rect x="111" y="426" width="1" height="3" fill="#ff90b0"/>
<rect x="109" y="437" width="1" height="3" fill="#ff90b0"/>
<rect x="111" y="437" width="1" height="3" fill="#ff90b0"/>
<rect x="109" y="448" width="1" height="3" fill="#ff90b0"/>
<rect x="111" y="448" width="1" height="3" fill="#ff90b0"/>
<rect x="109" y="459" width="1" height="3" fill="#ff90b0"/>
<rect x="111" y="459" width="1" height="3" fill="#ff90b0"/>
<rect x="109" y="470" width="1" height="3" fill="#ff90b0"/>
<rect x="111" y="470" width="1" height="3" fill="#ff90b0"/>
<rect x="109" y="481" width="1" height="3" fill="#ff90b0"/>
<rect x="111" y="481" width="1" height="3" fill="#ff90b0"/>
<rect x="109" y="492" width="1" height="3" fill="#ff90b0"/>
<rect x="111" y="492" width="1" height="3" fill="#ff90b0"/>
<rect x="109" y="503" width="1" height="3" fill="#ff90b0"/>
<rect x="111" y="503" width="1" height="3" fill="#ff90b0"/>
<rect x="109" y="514" width="1" height="3" fill="#ff90b0"/>
<rect x="111" y="514" width="1" height="3" fill="#ff90b0"/>
<rect x="109" y="525" width="1" height="3" fill="#ff90b0"/>
<rect x="111" y="525" width="1" height="3" fill="#ff90b0"/>
<rect x="109" y="536" width="1" height="3" fill="#ff90b0"/>
<rect x="111" y="536" width="1" height="3" fill="#ff90b0"/>
<rect x="109" y="547" width="1" height="3" fill="#ff90b0"/>
<rect x="111" y="547" width="1" height="3" fill="#ff90b0"/>
<rect x="238" y="262" width="1" height="24" fill="#a8107c"/>
<rect x="240" y="262" width="1" height="24" fill="#a8107c"/>
<rect x="242" y="262" width="1" height="24" fill="#a8107c"/>
<rect x="238" y="291" width="1" height="24" fill="#a8107c"/>
<rect x="240" y="291" width="1" height="24" fill="#a8107c"/>
<rect x="242" y="291" width="1" height="24" fill="#a8107c"/>
<rect x="238" y="320" width="1" height="24" fill="#a8107c"/>
<rect x="240" y="320" width="1" height="24" fill="#a8107c"/>
<rect x="242" y="320" width="1" height="24" fill="#a8107c"/>
<rect x="238" y="349" width="1" height="24" fill="#a8107c"/>
<rect x="240" y="349" width="1" height="24" fill="#a8107c"/>
<rect x="242" y="349" width="1" height="24" fill="#a8107c"/>
<rect x="238" y="378" width="1" height="24" fill="#a8107c"/>
<rect x="240" y="378" width="1" height="24" fill="#a8107c"/>
<rect x="242" y="378" width="1" height="24" fill="#a8107c"/>
<rect x="238" y="407" width="1" height="24" fill="#a8107c"/>
<rect x="240" y="407" width="1" height="24" fill="#a8107c"/>
<rect x="242" y="407" width="1" height="24" fill="#a8107c"/>
<rect x="238" y="436" width="1" height="24" fill="#a8107c"/>
<rect x="240" y="436" width="1" height="24" fill="#a8107c"/>
<rect x="242" y="436" width="1" height="24" fill="#a8107c"/>
<rect x="238" y="465" width="1" height="24" fill="#a8107c"/>
<rect x="240" y="465" width="1" height="24" fill="#a8107c"/>
<rect x="242" y="465" width="1" height="24" fill="#a8107c"/>
<rect x="238" y="494" width="1" height="24" fill="#a8107c"/>
<rect x="240" y="494" width="1" height="24" fill="#a8107c"/>
<rect x="242" y="494" width="1" height="24" fill="#a8107c"/>
<rect x="238" y="523" width="1" height="24" fill="#a8107c"/>
<rect x="240" y="523" width="1" height="24" fill="#a8107c"/>
<rect x="242" y="523" width="1" height="24" fill="#a8107c"/>
<rect x="238" y="272" width="1" height="3" fill="#ff90b0"/>
<rect x="240" y="272" width="1" height="3" fill="#ff90b0"/>
<rect x="238" y="283" width="1" height="3" fill="#ff90b0"/>
<rect x="240" y="283" width="1" height="3" fill="#ff90b0"/>
<rect x="238" y="294" width="1" height="3" fill="#ff90b0"/>
<rect x="240" y="294" width="1" height="3" fill="#ff90b0"/>
<rect x="238" y="305" width="1" height="3" fill="#ff90b0"/>
<rect x="240" y="305" width="1" height="3" fill="#ff90b0"/>
<rect x="238" y="316" width="1" height="3" fill="#ff90b0"/>
<rect x="240" y="316" width="1" height="3" fill="#ff90b0"/>
<rect x="238" y="327" width="1" height="3" fill="#ff90b0"/>
<rect x="240" y="327" width="1" height="3" fill="#ff90b0"/>
<rect x="238" y="338" width="1" height="3" fill="#ff90b0"/>
<rect x="240" y="338" width="1" height="3" fill="#ff90b0"/>
<rect x="238" y="349" width="1" height="3" fill="#ff90b0"/>
<rect x="240" y="349" width="1" height="3" fill="#ff90b0"/>
<rect x="238" y="360" width="1" height="3" fill="#ff90b0"/>
<rect x="240" y="360" width="1" height="3" fill="#ff90b0"/>
<rect x="238" y="371" width="1" height="3" fill="#ff90b0"/>
<rect x="240" y="371" width="1" height="3" fill="#ff90b0"/>
<rect x="238" y="382" width="1" height="3" fill="#ff90b0"/>
<rect x="240" y="382" width="1" height="3" fill="#ff90b0"/>
<rect x="238" y="393" width="1" height="3" fill="#ff90b0"/>
<rect x="240" y="393" width="1" height="3" fill="#ff90b0"/>
<rect x="238" y="404" width="1" height="3" fill="#ff90b0"/>
<rect x="240" y="404" width="1" height="3" fill="#ff90b0"/>
<rect x="238" y="415" width="1" height="3" fill="#ff90b0"/>
<rect x="240" y="415" width="1" height="3" fill="#ff90b0"/>
<rect x="238" y="426" width="1" height="3" fill="#ff90b0"/>
<rect x="240" y="426" width="1" height="3" fill="#ff90b0"/>
<rect x="238" y="437" width="1" height="3" fill="#ff90b0"/>
<rect x="240" y="437" width="1" height="3" fill="#ff90b0"/>
<rect x="238" y="448" width="1" height="3" fill="#ff90b0"/>
<rect x="240" y="448" width="1" height="3" fill="#ff90b0"/>
<rect x="238" y="459" width="1" height="3" fill="#ff90b0"/>
<rect x="240" y="459" width="1" height="3" fill="#ff90b0"/>
<rect x="238" y="470" width="1" height="3" fill="#ff90b0"/>
<rect x="240" y="470" width="1" height="3" fill="#ff90b0"/>
<rect x="238" y="481" width="1" height="3" fill="#ff90b0"/>
<rect x="240" y="481" width="1" height="3" fill="#ff90b0"/>
<rect x="238" y="492" width="1" height="3" fill="#ff90b0"/>
<rect x="240" y="492" width="1" height="3" fill="#ff90b0"/>
<rect x="238" y="503" width="1" height="3" fill="#ff90b0"/>
<rect x="240" y="503" width="1" height="3" fill="#ff90b0"/>
<rect x="238" y="514" width="1" height="3" fill="#ff90b0"/>
<rect x="240" y="514" width="1" height="3" fill="#ff90b0"/>
<rect x="238" y="525" width="1" height="3" fill="#ff90b0"/>
<rect x="240" y="525" width="1" height="3" fill="#ff90b0"/>
<rect x="238" y="536" width="1" height="3" fill="#ff90b0"/>
<rect x="240" y="536" width="1" height="3" fill="#ff90b0"/>
<rect x="238" y="547" width="1" height="3" fill="#ff90b0"/>
<rect x="240" y="547" width="1" height="3" fill="#ff90b0"/>
<rect x="366" y="262" width="1" height="24" fill="#a8107c"/>
<rect x="368" y="262" width="1" height="24" fill="#a8107c"/>
<rect x="370" y="262" width="1" height="24" fill="#a8107c"/>
<rect x="366" y="291" width="1" height="24" fill="#a8107c"/>
<rect x="368" y="291" width="1" height="24" fill="#a8107c"/>
<rect x="370" y="291" width="1" height="24" fill="#a8107c"/>
<rect x="366" y="320" width="1" height="24" fill="#a8107c"/>
<rect x="368" y="320" width="1" height="24" fill="#a8107c"/>
<rect x="370" y="320" width="1" height="24" fill="#a8107c"/>
<rect x="366" y="349" width="1" height="24" fill="#a8107c"/>
<rect x="368" y="349" width="1" height="24" fill="#a8107c"/>
<rect x="370" y="349" width="1" height="24" fill="#a8107c"/>
<rect x="366" y="378" width="1" height="24" fill="#a8107c"/>
<rect x="368" y="378" width="1" height="24" fill="#a8107c"/>
<rect x="370" y="378" width="1" height="24" fill="#a8107c"/>
<rect x="366" y="407" width="1" height="24" fill="#a8107c"/>
<rect x="368" y="407" width="1" height="24" fill="#a8107c"/>
<rect x="370" y="407" width="1" height="24" fill="#a8107c"/>
<rect x="366" y="436" width="1" height="24" fill="#a8107c"/>
<rect x="368" y="436" width="1" height="24" fill="#a8107c"/>
<rect x="370" y="436" width="1" height="24" fill="#a8107c"/>
<rect x="366" y="465" width="1" height="24" fill="#a8107c"/>
<rect x="368" y="465" width="1" height="24" fill="#a8107c"/>
<rect x="370" y="465" width="1" height="24" fill="#a8107c"/>
<rect x="366" y="494" width="1" height="24" fill="#a8107c"/>
<rect x="368" y="494" width="1" height="24" fill="#a8107c"/>
<rect x="370" y="494" width="1" height="24" fill="#a8107c"/>
<rect x="366" y="523" width="1" height="24" fill="#a8107c"/>
<rect x="368" y="523" width="1" height="24" fill="#a8107c"/>
<rect x="370" y="523" width="1" height="24" fill="#a8107c"/>
<rect x="366" y="272" width="1" height="3" fill="#ff90b0"/>
<rect x="368" y="272" width="1" height="3" fill="#ff90b0"/>
<rect x="366" y="283" width="1" height="3" fill="#ff90b0"/>
<rect x="368" y="283" width="1" height="3" fill="#ff90b0"/>
<rect x="366" y="294" width="1" height="3" fill="#ff90b0"/>
<rect x="368" y="294" width="1" height="3" fill="#ff90b0"/>
<rect x="366" y="305" width="1" height="3" fill="#ff90b0"/>
<rect x="368" y="305" width="1" height="3" fill="#ff90b0"/>
<rect x="366" y="316" width="1" height="3" fill="#ff90b0"/>
<rect x="368" y="316" width="1" height="3" fill="#ff90b0"/>
<rect x="366" y="327" width="1" height="3" fill="#ff90b0"/>
<rect x="368" y="327" width="1" height="3" fill="#ff90b0"/>
<rect x="366" y="338" width="1" height="3" fill="#ff90b0"/>
<rect x="368" y="338" width="1" height="3" fill="#ff90b0"/>
<rect x="366" y="349" width="1" height="3" fill="#ff90b0"/>
<rect x="368" y="349" width="1" height="3" fill="#ff90b0"/>
<rect x="366" y="360" width="1" height="3" fill="#ff90b0"/>
<rect x="368" y="360" width="1" height="3" fill="#ff90b0"/>
<rect x="366" y="371" width="1" height="3" fill="#ff90b0"/>
<rect x="368" y="371" width="1" height="3" fill="#ff90b0"/>
<rect x="366" y="382" width="1" height="3" fill="#ff90b0"/>
<rect x="368" y="382" width="1" height="3" fill="#ff90b0"/>
<rect x="366" y="393" width="1" height="3" fill="#ff90b0"/>
<rect x="368" y="393" width="1" height="3" fill="#ff90b0"/>
<rect x="366" y="404" width="1" height="3" fill="#ff90b0"/>
<rect x="368" y="404" width="1" height="3" fill="#ff90b0"/>
<rect x="366" y="415" width="1" height="3" fill="#ff90b0"/>
<rect x="368" y="415" width="1" height="3" fill="#ff90b0"/>
<rect x="366" y="426" width="1" height="3" fill="#ff90b0"/>
<rect x="368" y="426" width="1" height="3" fill="#ff90b0"/>
<rect x="366" y="437" width="1" height="3" fill="#ff90b0"/>
<rect x="368" y="437" width="1" height="3" fill="#ff90b0"/>
<rect x="366" y="448" width="1" height="3" fill="#ff90b0"/>
<rect x="368" y="448" width="1" height="3" fill="#ff90b0"/>
<rect x="366" y="459" width="1" height="3" fill="#ff90b0"/>
<rect x="368" y="459" width="1" height="3" fill="#ff90b0"/>
<rect x="366" y="470" width="1" height="3" fill="#ff90b0"/>
<rect x="368" y="470" width="1" height="3" fill="#ff90b0"/>
<rect x="366" y="481" width="1" height="3" fill="#ff90b0"/>
<rect x="368" y="481" width="1" height="3" fill="#ff90b0"/>
<rect x="366" y="492" width="1" height="3" fill="#ff90b0"/>
<rect x="368" y="492" width="1" height="3" fill="#ff90b0"/>
<rect x="366" y="503" width="1" height="3" fill="#ff90b0"/>
<rect x="368" y="503" width="1" height="3" fill="#ff90b0"/>
<rect x="366" y="514" width="1" height="3" fill="#ff90b0"/>
<rect x="368" y="514" width="1" height="3" fill="#ff90b0"/>
<rect x="366" y="525" width="1" height="3" fill="#ff90b0"/>
<rect x="368" y="525" width="1" height="3" fill="#ff90b0"/>
<rect x="366" y="536" width="1" height="3" fill="#ff90b0"/>
<rect x="368" y="536" width="1" height="3" fill="#ff90b0"/>
<rect x="366" y="547" width="1" height="3" fill="#ff90b0"/>
<rect x="368" y="547" width="1" height="3" fill="#ff90b0"/>
<rect x="495" y="262" width="1" height="24" fill="#a8107c"/>
<rect x="497" y="262" width="1" height="24" fill="#a8107c"/>
<rect x="499" y="262" width="1" height="24" fill="#a8107c"/>
<rect x="495" y="291" width="1" height="24" fill="#a8107c"/>
<rect x="497" y="291" width="1" height="24" fill="#a8107c"/>
<rect x="499" y="291" width="1" height="24" fill="#a8107c"/>
<rect x="495" y="320" width="1" height="24" fill="#a8107c"/>
<rect x="497" y="320" width="1" height="24" fill="#a8107c"/>
<rect x="499" y="320" width="1" height="24" fill="#a8107c"/>
<rect x="495" y="349" width="1" height="24" fill="#a8107c"/>
<rect x="497" y="349" width="1" height="24" fill="#a8107c"/>
<rect x="499" y="349" width="1" height="24" fill="#a8107c"/>
<rect x="495" y="378" width="1" height="24" fill="#a8107c"/>
<rect x="497" y="378" width="1" height="24" fill="#a8107c"/>
<rect x="499" y="378" width="1" height="24" fill="#a8107c"/>
<rect x="495" y="407" width="1" height="24" fill="#a8107c"/>
<rect x="497" y="407" width="1" height="24" fill="#a8107c"/>
<rect x="499" y="407" width="1" height="24" fill="#a8107c"/>
<rect x="495" y="436" width="1" height="24" fill="#a8107c"/>
<rect x="497" y="436" width="1" height="24" fill="#a8107c"/>
<rect x="499" y="436" width="1" height="24" fill="#a8107c"/>
<rect x="495" y="465" width="1" height="24" fill="#a8107c"/>
<rect x="497" y="465" width="1" height="24" fill="#a8107c"/>
<rect x="499" y="465" width="1" height="24" fill="#a8107c"/>
<rect x="495" y="494" width="1" height="24" fill="#a8107c"/>
<rect x="497" y="494" width="1" height="24" fill="#a8107c"/>
<rect x="499" y="494" width="1" height="24" fill="#a8107c"/>
<rect x="495" y="523" width="1" height="24" fill="#a8107c"/>
<rect x="497" y="523" width="1" height="24" fill="#a8107c"/>
<rect x="499" y="523" width="1" height="24" fill="#a8107c"/>
<rect x="495" y="272" width="1" height="3" fill="#ff90b0"/>
<rect x="497" y="272" width="1" height="3" fill="#ff90b0"/>
<rect x="495" y="283" width="1" height="3" fill="#ff90b0"/>
<rect x="497" y="283" width="1" height="3" fill="#ff90b0"/>
<rect x="495" y="294" width="1" height="3" fill="#ff90b0"/>
<rect x="497" y="294" width="1" height="3" fill="#ff90b0"/>
<rect x="495" y="305" width="1" height="3" fill="#ff90b0"/>
<rect x="497" y="305" width="1" height="3" fill="#ff90b0"/>
<rect x="495" y="316" width="1" height="3" fill="#ff90b0"/>
<rect x="497" y="316" width="1" height="3" fill="#ff90b0"/>
<rect x="495" y="327" width="1" height="3" fill="#ff90b0"/>
<rect x="497" y="327" width="1" height="3" fill="#ff90b0"/>
<rect x="495" y="338" width="1" height="3" fill="#ff90b0"/>
<rect x="497" y="338" width="1" height="3" fill="#ff90b0"/>
<rect x="495" y="349" width="1" height="3" fill="#ff90b0"/>
<rect x="497" y="349" width="1" height="3" fill="#ff90b0"/>
<rect x="495" y="360" width="1" height="3" fill="#ff90b0"/>
<rect x="497" y="360" width="1" height="3" fill="#ff90b0"/>
<rect x="495" y="371" width="1" height="3" fill="#ff90b0"/>
<rect x="497" y="371" width="1" height="3" fill="#ff90b0"/>
<rect x="495" y="382" width="1" height="3" fill="#ff90b0"/>
<rect x="497" y="382" width="1" height="3" fill="#ff90b0"/>
<rect x="495" y="393" width="1" height="3" fill="#ff90b0"/>
<rect x="497" y="393" width="1" height="3" fill="#ff90b0"/>
<rect x="495" y="404" width="1" height="3" fill="#ff90b0"/>
<rect x="497" y="404" width="1" height="3" fill="#ff90b0"/>
<rect x="495" y="415" width="1" height="3" fill="#ff90b0"/>
<rect x="497" y="415" width="1" height="3" fill="#ff90b0"/>
<rect x="495" y="426" width="1" height="3" fill="#ff90b0"/>
<rect x="497" y="426" width="1" height="3" fill="#ff90b0"/>
<rect x="495" y="437" width="1" height="3" fill="#ff90b0"/>
<rect x="497" y="437" width="1" height="3" fill="#ff90b0"/>
<rect x="495" y="448" width="1" height="3" fill="#ff90b0"/>
<rect x="497" y="448" width="1" height="3" fill="#ff90b0"/>
<rect x="495" y="459" width="1" height="3" fill="#ff90b0"/>
<rect x="497" y="459" width="1" height="3" fill="#ff90b0"/>
<rect x="495" y="470" width="1" height="3" fill="#ff90b0"/>
<rect x="497" y="470" width="1" height="3" fill="#ff90b0"/>
<rect x="495" y="481" width="1" height="3" fill="#ff90b0"/>
<rect x="497" y="481" width="1" height="3" fill="#ff90b0"/>
<rect x="495" y="492" width="1" height="3" fill="#ff90b0"/>
<rect x="497" y="492" width="1" height="3" fill="#ff90b0"/>
<rect x="495" y="503" width="1" height="3" fill="#ff90b0"/>
<rect x="497" y="503" width="1" height="3" fill="#ff90b0"/>
<rect x="495" y="514" width="1" height="3" fill="#ff90b0"/>
<rect x="497" y="514" width="1" height="3" fill="#ff90b0"/>
<rect x="495" y="525" width="1" height="3" fill="#ff90b0"/>
<rect x="497" y="525" width="1" height="3" fill="#ff90b0"/>
<rect x="495" y="536" width="1" height="3" fill="#ff90b0"/>
<rect x="497" y="536" width="1" height="3" fill="#ff90b0"/>
<rect x="495" y="547" width="1" height="3" fill="#ff90b0"/>
<rect x="497" y="547" width="1" height="3" fill="#ff90b0"/>
<rect x="624" y="262" width="1" height="24" fill="#a8107c"/>
<rect x="626" y="262" width="1" height="24" fill="#a8107c"/>
<rect x="628" y="262" width="1" height="24" fill="#a8107c"/>
<rect x="624" y="291" width="1" height="24" fill="#a8107c"/>
<rect x="626" y="291" width="1" height="24" fill="#a8107c"/>
<rect x="628" y="291" width="1" height="24" fill="#a8107c"/>
<rect x="624" y="320" width="1" height="24" fill="#a8107c"/>
<rect x="626" y="320" width="1" height="24" fill="#a8107c"/>
<rect x="628" y="320" width="1" height="24" fill="#a8107c"/>
<rect x="624" y="349" width="1" height="24" fill="#a8107c"/>
<rect x="626" y="349" width="1" height="24" fill="#a8107c"/>
<rect x="628" y="349" width="1" height="24" fill="#a8107c"/>
<rect x="624" y="378" width="1" height="24" fill="#a8107c"/>
<rect x="626" y="378" width="1" height="24" fill="#a8107c"/>
<rect x="628" y="378" width="1" height="24" fill="#a8107c"/>
<rect x="624" y="407" width="1" height="24" fill="#a8107c"/>
<rect x="626" y="407" width="1" height="24" fill="#a8107c"/>
<rect x="628" y="407" width="1" height="24" fill="#a8107c"/>
<rect x="624" y="436" width="1" height="24" fill="#a8107c"/>
<rect x="626" y="436" width="1" height="24" fill="#a8107c"/>
<rect x="628" y="436" width="1" height="24" fill="#a8107c"/>
<rect x="624" y="465" width="1" height="24" fill="#a8107c"/>
<rect x="626" y="465" width="1" height="24" fill="#a8107c"/>
<rect x="628" y="465" width="1" height="24" fill="#a8107c"/>
<rect x="624" y="494" width="1" height="24" fill="#a8107c"/>
<rect x="626" y="494" width="1" height="24" fill="#a8107c"/>
<rect x="628" y="494" width="1" height="24" fill="#a8107c"/>
<rect x="624" y="523" width="1" height="24" fill="#a8107c"/>
<rect x="626" y="523" width="1" height="24" fill="#a8107c"/>
<rect x="628" y="523" width="1" height="24" fill="#a8107c"/>
<rect x="624" y="272" width="1" height="3" fill="#ff90b0"/>
<rect x="626" y="272" width="1" height="3" fill="#ff90b0"/>
<rect x="624" y="283" width="1" height="3" fill="#ff90b0"/>
<rect x="626" y="283" width="1" height="3" fill="#ff90b0"/>
<rect x="624" y="294" width="1" height="3" fill="#ff90b0"/>
<rect x="626" y="294" width="1" height="3" fill="#ff90b0"/>
<rect x="624" y="305" width="1" height="3" fill="#ff90b0"/>
<rect x="626" y="305" width="1" height="3" fill="#ff90b0"/>
<rect x="624" y="316" width="1" height="3" fill="#ff90b0"/>
<rect x="626" y="316" width="1" height="3" fill="#ff90b0"/>
<rect x="624" y="327" width="1" height="3" fill="#ff90b0"/>
<rect x="626" y="327" width="1" height="3" fill="#ff90b0"/>
<rect x="624" y="338" width="1" height="3" fill="#ff90b0"/>
<rect x="626" y="338" width="1" height="3" fill="#ff90b0"/>
<rect x="624" y="349" width="1" height="3" fill="#ff90b0"/>
<rect x="626" y="349" width="1" height="3" fill="#ff90b0"/>
<rect x="624" y="360" width="1" height="3" fill="#ff90b0"/>
<rect x="626" y="360" width="1" height="3" fill="#ff90b0"/>
<rect x="624" y="371" width="1" height="3" fill="#ff90b0"/>
<rect x="626" y="371" width="1" height="3" fill="#ff90b0"/>
<rect x="624" y="382" width="1" height="3" fill="#ff90b0"/>
<rect x="626" y="382" width="1" height="3" fill="#ff90b0"/>
<rect x="624" y="393" width="1" height="3" fill="#ff90b0"/>
<rect x="626" y="393" width="1" height="3" fill="#ff90b0"/>
<rect x="624" y="404" width="1" height="3" fill="#ff90b0"/>
<rect x="626" y="404" width="1" height="3" fill="#ff90b0"/>
<rect x="624" y="415" width="1" height="3" fill="#ff90b0"/>
<rect x="626" y="415" width="1" height="3" fill="#ff90b0"/>
<rect x="624" y="426" width="1" height="3" fill="#ff90b0"/>
<rect x="626" y="426" width="1" height="3" fill="#ff90b0"/>
<rect x="624" y="437" width="1" height="3" fill="#ff90b0"/>
<rect x="626" y="437" width="1" height="3" fill="#ff90b0"/>
<rect x="624" y="448" width="1" height="3" fill="#ff90b0"/>
<rect x="626" y="448" width="1" height="3" fill="#ff90b0"/>
<rect x="624" y="459" width="1" height="3" fill="#ff90b0"/>
<rect x="626" y="459" width="1" height="3" fill="#ff90b0"/>
<rect x="624" y="470" width="1" height="3" fill="#ff90b0"/>
<rect x="626" y="470" width="1" height="3" fill="#ff90b0"/>
<rect x="624" y="481" width="1" height="3" fill="#ff90b0"/>
<rect x="626" y="481" width="1" height="3" fill="#ff90b0"/>
<rect x="624" y="492" width="1" height="3" fill="#ff90b0"/>
<rect x="626" y="492" width="1" height="3" fill="#ff90b0"/>
<rect x="624" y="503" width="1" height="3" fill="#ff90b0"/>
<rect x="626" y="503" width="1" height="3" fill="#ff90b0"/>
<rect x="624" y="514" width="1" height="3" fill="#ff90b0"/>
<rect x="626" y="514" width="1" height="3" fill="#ff90b0"/>
<rect x="624" y="525" width="1" height="3" fill="#ff90b0"/>
<rect x="626" y="525" width="1" height="3" fill="#ff90b0"/>
<rect x="624" y="536" width="1" height="3" fill="#ff90b0"/>
<rect x="626" y="536" width="1" height="3" fill="#ff90b0"/>
<rect x="624" y="547" width="1" height="3" fill="#ff90b0"/>
<rect x="626" y="547" width="1" height="3" fill="#ff90b0"/>
<rect x="754" y="262" width="1" height="24" fill="#a8107c"/>
<rect x="756" y="262" width="1" height="24" fill="#a8107c"/>
<rect x="758" y="262" width="1" height="24" fill="#a8107c"/>
<rect x="754" y="291" width="1" height="24" fill="#a8107c"/>
<rect x="756" y="291" width="1" height="24" fill="#a8107c"/>
<rect x="758" y="291" width="1" height="24" fill="#a8107c"/>
<rect x="754" y="320" width="1" height="24" fill="#a8107c"/>
<rect x="756" y="320" width="1" height="24" fill="#a8107c"/>
<rect x="758" y="320" width="1" height="24" fill="#a8107c"/>
<rect x="754" y="349" width="1" height="24" fill="#a8107c"/>
<rect x="756" y="349" width="1" height="24" fill="#a8107c"/>
<rect x="758" y="349" width="1" height="24" fill="#a8107c"/>
<rect x="754" y="378" width="1" height="24" fill="#a8107c"/>
<rect x="756" y="378" width="1" height="24" fill="#a8107c"/>
<rect x="758" y="378" width="1" height="24" fill="#a8107c"/>
<rect x="754" y="407" width="1" height="24" fill="#a8107c"/>
<rect x="756" y="407" width="1" height="24" fill="#a8107c"/>
<rect x="758" y="407" width="1" height="24" fill="#a8107c"/>
<rect x="754" y="436" width="1" height="24" fill="#a8107c"/>
<rect x="756" y="436" width="1" height="24" fill="#a8107c"/>
<rect x="758" y="436" width="1" height="24" fill="#a8107c"/>
<rect x="754" y="465" width="1" height="24" fill="#a8107c"/>
<rect x="756" y="465" width="1" height="24" fill="#a8107c"/>
<rect x="758" y="465" width="1" height="24" fill="#a8107c"/>
<rect x="754" y="494" width="1" height="24" fill="#a8107c"/>
<rect x="756" y="494" width="1" height="24" fill="#a8107c"/>
<rect x="758" y="494" width="1" height="24" fill="#a8107c"/>
<rect x="754" y="523" width="1" height="24" fill="#a8107c"/>
<rect x="756" y="523" width="1" height="24" fill="#a8107c"/>
<rect x="758" y="523" width="1" height="24" fill="#a8107c"/>
<rect x="754" y="272" width="1" height="3" fill="#ff90b0"/>
<rect x="756" y="272" width="1" height="3" fill="#ff90b0"/>
<rect x="754" y="283" width="1" height="3" fill="#ff90b0"/>
<rect x="756" y="283" width="1" height="3" fill="#ff90b0"/>
<rect x="754" y="294" width="1" height="3" fill="#ff90b0"/>
<rect x="756" y="294" width="1" height="3" fill="#ff90b0"/>
<rect x="754" y="305" width="1" height="3" fill="#ff90b0"/>
<rect x="756" y="305" width="1" height="3" fill="#ff90b0"/>
<rect x="754" y="316" width="1" height="3" fill="#ff90b0"/>
<rect x="756" y="316" width="1" height="3" fill="#ff90b0"/>
<rect x="754" y="327" width="1" height="3" fill="#ff90b0"/>
<rect x="756" y="327" width="1" height="3" fill="#ff90b0"/>
<rect x="754" y="338" width="1" height="3" fill="#ff90b0"/>
<rect x="756" y="338" width="1" height="3" fill="#ff90b0"/>
<rect x="754" y="349" width="1" height="3" fill="#ff90b0"/>
<rect x="756" y="349" width="1" height="3" fill="#ff90b0"/>
<rect x="754" y="360" width="1" height="3" fill="#ff90b0"/>
<rect x="756" y="360" width="1" height="3" fill="#ff90b0"/>
<rect x="754" y="371" width="1" height="3" fill="#ff90b0"/>
<rect x="756" y="371" width="1" height="3" fill="#ff90b0"/>
<rect x="754" y="382" width="1" height="3" fill="#ff90b0"/>
<rect x="756" y="382" width="1" height="3" fill="#ff90b0"/>
<rect x="754" y="393" width="1" height="3" fill="#ff90b0"/>
<rect x="756" y="393" width="1" height="3" fill="#ff90b0"/>
<rect x="754" y="404" width="1" height="3" fill="#ff90b0"/>
<rect x="756" y="404" width="1" height="3" fill="#ff90b0"/>
<rect x="754" y="415" width="1" height="3" fill="#ff90b0"/>
<rect x="756" y="415" width="1" height="3" fill="#ff90b0"/>
<rect x="754" y="426" width="1" height="3" fill="#ff90b0"/>
<rect x="756" y="426" width="1" height="3" fill="#ff90b0"/>
<rect x="754" y="437" width="1" height="3" fill="#ff90b0"/>
<rect x="756" y="437" width="1" height="3" fill="#ff90b0"/>
<rect x="754" y="448" width="1" height="3" fill="#ff90b0"/>
<rect x="756" y="448" width="1" height="3" fill="#ff90b0"/>
<rect x="754" y="459" width="1" height="3" fill="#ff90b0"/>
<rect x="756" y="459" width="1" height="3" fill="#ff90b0"/>
<rect x="754" y="470" width="1" height="3" fill="#ff90b0"/>
<rect x="756" y="470" width="1" height="3" fill="#ff90b0"/>
<rect x="754" y="481" width="1" height="3" fill="#ff90b0"/>
<rect x="756" y="481" width="1" height="3" fill="#ff90b0"/>
<rect x="754" y="492" width="1" height="3" fill="#ff90b0"/>
<rect x="756" y="492" width="1" height="3" fill="#ff90b0"/>
<rect x="754" y="503" width="1" height="3" fill="#ff90b0"/>
<rect x="756" y="503" width="1" height="3" fill="#ff90b0"/>
<rect x="754" y="514" width="1" height="3" fill="#ff90b0"/>
<rect x="756" y="514" width="1" height="3" fill="#ff90b0"/>
<rect x="754" y="525" width="1" height="3" fill="#ff90b0"/>
<rect x="756" y="525" width="1" height="3" fill="#ff90b0"/>
<rect x="754" y="536" width="1" height="3" fill="#ff90b0"/>
<rect x="756" y="536" width="1" height="3" fill="#ff90b0"/>
<rect x="754" y="547" width="1" height="3" fill="#ff90b0"/>
<rect x="756" y="547" width="1" height="3" fill="#ff90b0"/>
<rect x="297" y="260" width="1" height="296" fill="#b01090"/>
<rect x="297" y="262" width="1" height="3" fill="#ffa040"/>
<rect x="297" y="270" width="1" height="3" fill="#ffa040"/>
<rect x="297" y="278" width="1" height="3" fill="#ffa040"/>
<rect x="297" y="286" width="1" height="3" fill="#ffa040"/>
<rect x="297" y="294" width="1" height="3" fill="#ffa040"/>
<rect x="297" y="302" width="1" height="3" fill="#ffa040"/>
<rect x="297" y="310" width="1" height="3" fill="#ffa040"/>
<rect x="297" y="318" width="1" height="3" fill="#ffa040"/>
<rect x="297" y="326" width="1" height="3" fill="#ffa040"/>
<rect x="297" y="334" width="1" height="3" fill="#ffa040"/>
<rect x="297" y="342" width="1" height="3" fill="#ffa040"/>
<rect x="297" y="350" width="1" height="3" fill="#ffa040"/>
<rect x="297" y="358" width="1" height="3" fill="#ffa040"/>
<rect x="297" y="366" width="1" height="3" fill="#ffa040"/>
<rect x="297" y="374" width="1" height="3" fill="#ffa040"/>
<rect x="297" y="382" width="1" height="3" fill="#ffa040"/>
<rect x="297" y="390" width="1" height="3" fill="#ffa040"/>
<rect x="297" y="398" width="1" height="3" fill="#ffa040"/>
<rect x="297" y="406" width="1" height="3" fill="#ffa040"/>
<rect x="297" y="414" width="1" height="3" fill="#ffa040"/>
<rect x="297" y="422" width="1" height="3" fill="#ffa040"/>
<rect x="297" y="430" width="1" height="3" fill="#ffa040"/>
<rect x="297" y="438" width="1" height="3" fill="#ffa040"/>
<rect x="297" y="446" width="1" height="3" fill="#ffa040"/>
<rect x="297" y="454" width="1" height="3" fill="#ffa040"/>
<rect x="297" y="462" width="1" height="3" fill="#ffa040"/>
<rect x="297" y="470" width="1" height="3" fill="#ffa040"/>
<rect x="297" y="478" width="1" height="3" fill="#ffa040"/>
<rect x="297" y="486" width="1" height="3" fill="#ffa040"/>
<rect x="297" y="494" width="1" height="3" fill="#ffa040"/>
<rect x="297" y="502" width="1" height="3" fill="#ffa040"/>
<rect x="297" y="510" width="1" height="3" fill="#ffa040"/>
<rect x="297" y="518" width="1" height="3" fill="#ffa040"/>
<rect x="297" y="526" width="1" height="3" fill="#ffa040"/>
<rect x="297" y="534" width="1" height="3" fill="#ffa040"/>
<rect x="297" y="542" width="1" height="3" fill="#ffa040"/>
<rect x="297" y="550" width="1" height="3" fill="#ffa040"/>
<rect x="340" y="260" width="1" height="296" fill="#b01090"/>
<rect x="340" y="262" width="1" height="3" fill="#ffa040"/>
<rect x="340" y="270" width="1" height="3" fill="#ffa040"/>
<rect x="340" y="278" width="1" height="3" fill="#ffa040"/>
<rect x="340" y="286" width="1" height="3" fill="#ffa040"/>
<rect x="340" y="294" width="1" height="3" fill="#ffa040"/>
<rect x="340" y="302" width="1" height="3" fill="#ffa040"/>
<rect x="340" y="310" width="1" height="3" fill="#ffa040"/>
<rect x="340" y="318" width="1" height="3" fill="#ffa040"/>
<rect x="340" y="326" width="1" height="3" fill="#ffa040"/>
<rect x="340" y="334" width="1" height="3" fill="#ffa040"/>
<rect x="340" y="342" width="1" height="3" fill="#ffa040"/>
<rect x="340" y="350" width="1" height="3" fill="#ffa040"/>
<rect x="340" y="358" width="1" height="3" fill="#ffa040"/>
<rect x="340" y="366" width="1" height="3" fill="#ffa040"/>
<rect x="340" y="374" width="1" height="3" fill="#ffa040"/>
<rect x="340" y="382" width="1" height="3" fill="#ffa040"/>
<rect x="340" y="390" width="1" height="3" fill="#ffa040"/>
<rect x="340" y="398" width="1" height="3" fill="#ffa040"/>
<rect x="340" y="406" width="1" height="3" fill="#ffa040"/>
<rect x="340" y="414" width="1" height="3" fill="#ffa040"/>
<rect x="340" y="422" width="1" height="3" fill="#ffa040"/>
<rect x="340" y="430" width="1" height="3" fill="#ffa040"/>
<rect x="340" y="438" width="1" height="3" fill="#ffa040"/>
<rect x="340" y="446" width="1" height="3" fill="#ffa040"/>
<rect x="340" y="454" width="1" height="3" fill="#ffa040"/>
<rect x="340" y="462" width="1" height="3" fill="#ffa040"/>
<rect x="340" y="470" width="1" height="3" fill="#ffa040"/>
<rect x="340" y="478" width="1" height="3" fill="#ffa040"/>
<rect x="340" y="486" width="1" height="3" fill="#ffa040"/>
<rect x="340" y="494" width="1" height="3" fill="#ffa040"/>
<rect x="340" y="502" width="1" height="3" fill="#ffa040"/>
<rect x="340" y="510" width="1" height="3" fill="#ffa040"/>
<rect x="340" y="518" width="1" height="3" fill="#ffa040"/>
<rect x="340" y="526" width="1" height="3" fill="#ffa040"/>
<rect x="340" y="534" width="1" height="3" fill="#ffa040"/>
<rect x="340" y="542" width="1" height="3" fill="#ffa040"/>
<rect x="340" y="550" width="1" height="3" fill="#ffa040"/>
<rect x="514" y="260" width="1" height="296" fill="#b01090"/>
<rect x="514" y="262" width="1" height="3" fill="#ffa040"/>
<rect x="514" y="270" width="1" height="3" fill="#ffa040"/>
<rect x="514" y="278" width="1" height="3" fill="#ffa040"/>
<rect x="514" y="286" width="1" height="3" fill="#ffa040"/>
<rect x="514" y="294" width="1" height="3" fill="#ffa040"/>
<rect x="514" y="302" width="1" height="3" fill="#ffa040"/>
<rect x="514" y="310" width="1" height="3" fill="#ffa040"/>
<rect x="514" y="318" width="1" height="3" fill="#ffa040"/>
<rect x="514" y="326" width="1" height="3" fill="#ffa040"/>
<rect x="514" y="334" width="1" height="3" fill="#ffa040"/>
<rect x="514" y="342" width="1" height="3" fill="#ffa040"/>
<rect x="514" y="350" width="1" height="3" fill="#ffa040"/>
<rect x="514" y="358" width="1" height="3" fill="#ffa040"/>
<rect x="514" y="366" width="1" height="3" fill="#ffa040"/>
<rect x="514" y="374" width="1" height="3" fill="#ffa040"/>
<rect x="514" y="382" width="1" height="3" fill="#ffa040"/>
<rect x="514" y="390" width="1" height="3" fill="#ffa040"/>
<rect x="514" y="398" width="1" height="3" fill="#ffa040"/>
<rect x="514" y="406" width="1" height="3" fill="#ffa040"/>
<rect x="514" y="414" width="1" height="3" fill="#ffa040"/>
<rect x="514" y="422" width="1" height="3" fill="#ffa040"/>
<rect x="514" y="430" width="1" height="3" fill="#ffa040"/>
<rect x="514" y="438" width="1" height="3" fill="#ffa040"/>
<rect x="514" y="446" width="1" height="3" fill="#ffa040"/>
<rect x="514" y="454" width="1" height="3" fill="#ffa040"/>
<rect x="514" y="462" width="1" height="3" fill="#ffa040"/>
<rect x="514" y="470" width="1" height="3" fill="#ffa040"/>
<rect x="514" y="478" width="1" height="3" fill="#ffa040"/>
<rect x="514" y="486" width="1" height="3" fill="#ffa040"/>
<rect x="514" y="494" width="1" height="3" fill="#ffa040"/>
<rect x="514" y="502" width="1" height="3" fill="#ffa040"/>
<rect x="514" y="510" width="1" height="3" fill="#ffa040"/>
<rect x="514" y="518" width="1" height="3" fill="#ffa040"/>
<rect x="514" y="526" width="1" height="3" fill="#ffa040"/>
<rect x="514" y="534" width="1" height="3" fill="#ffa040"/>
<rect x="514" y="542" width="1" height="3" fill="#ffa040"/>
<rect x="514" y="550" width="1" height="3" fill="#ffa040"/>
<rect x="689" y="260" width="1" height="296" fill="#b01090"/>
<rect x="689" y="262" width="1" height="3" fill="#ffa040"/>
<rect x="689" y="270" width="1" height="3" fill="#ffa040"/>
<rect x="689" y="278" width="1" height="3" fill="#ffa040"/>
<rect x="689" y="286" width="1" height="3" fill="#ffa040"/>
<rect x="689" y="294" width="1" height="3" fill="#ffa040"/>
<rect x="689" y="302" width="1" height="3" fill="#ffa040"/>
<rect x="689" y="310" width="1" height="3" fill="#ffa040"/>
<rect x="689" y="318" width="1" height="3" fill="#ffa040"/>
<rect x="689" y="326" width="1" height="3" fill="#ffa040"/>
<rect x="689" y="334" width="1" height="3" fill="#ffa040"/>
<rect x="689" y="342" width="1" height="3" fill="#ffa040"/>
<rect x="689" y="350" width="1" height="3" fill="#ffa040"/>
<rect x="689" y="358" width="1" height="3" fill="#ffa040"/>
<rect x="689" y="366" width="1" height="3" fill="#ffa040"/>
<rect x="689" y="374" width="1" height="3" fill="#ffa040"/>
<rect x="689" y="382" width="1" height="3" fill="#ffa040"/>
<rect x="689" y="390" width="1" height="3" fill="#ffa040"/>
<rect x="689" y="398" width="1" height="3" fill="#ffa040"/>
<rect x="689" y="406" width="1" height="3" fill="#ffa040"/>
<rect x="689" y="414" width="1" height="3" fill="#ffa040"/>
<rect x="689" y="422" width="1" height="3" fill="#ffa040"/>
<rect x="689" y="430" width="1" height="3" fill="#ffa040"/>
<rect x="689" y="438" width="1" height="3" fill="#ffa040"/>
<rect x="689" y="446" width="1" height="3" fill="#ffa040"/>
<rect x="689" y="454" width="1" height="3" fill="#ffa040"/>
<rect x="689" y="462" width="1" height="3" fill="#ffa040"/>
<rect x="689" y="470" width="1" height="3" fill="#ffa040"/>
<rect x="689" y="478" width="1" height="3" fill="#ffa040"/>
<rect x="689" y="486" width="1" height="3" fill="#ffa040"/>
<rect x="689" y="494" width="1" height="3" fill="#ffa040"/>
<rect x="689" y="502" width="1" height="3" fill="#ffa040"/>
<rect x="689" y="510" width="1" height="3" fill="#ffa040"/>
<rect x="689" y="518" width="1" height="3" fill="#ffa040"/>
<rect x="689" y="526" width="1" height="3" fill="#ffa040"/>
<rect x="689" y="534" width="1" height="3" fill="#ffa040"/>
<rect x="689" y="542" width="1" height="3" fill="#ffa040"/>
<rect x="689" y="550" width="1" height="3" fill="#ffa040"/>
<rect x="731" y="260" width="1" height="296" fill="#ffa040"/>
<rect x="160" y="262" width="1" height="1" fill="#a8107c"/>
<rect x="160" y="275" width="1" height="1" fill="#a8107c"/>
<rect x="160" y="288" width="1" height="1" fill="#a8107c"/>
<rect x="160" y="301" width="1" height="1" fill="#a8107c"/>
<rect x="160" y="314" width="1" height="1" fill="#a8107c"/>
<rect x="160" y="327" width="1" height="1" fill="#a8107c"/>
<rect x="160" y="340" width="1" height="1" fill="#a8107c"/>
<rect x="160" y="353" width="1" height="1" fill="#a8107c"/>
<rect x="160" y="366" width="1" height="1" fill="#a8107c"/>
<rect x="160" y="379" width="1" height="1" fill="#a8107c"/>
<rect x="160" y="392" width="1" height="1" fill="#a8107c"/>
<rect x="160" y="405" width="1" height="1" fill="#a8107c"/>
<rect x="160" y="418" width="1" height="1" fill="#a8107c"/>
<rect x="160" y="431" width="1" height="1" fill="#a8107c"/>
<rect x="160" y="444" width="1" height="1" fill="#a8107c"/>
<rect x="160" y="457" width="1" height="1" fill="#a8107c"/>
<rect x="160" y="470" width="1" height="1" fill="#a8107c"/>
<rect x="160" y="483" width="1" height="1" fill="#a8107c"/>
<rect x="160" y="496" width="1" height="1" fill="#a8107c"/>
<rect x="160" y="509" width="1" height="1" fill="#a8107c"/>
<rect x="160" y="522" width="1" height="1" fill="#a8107c"/>
<rect x="160" y="535" width="1" height="1" fill="#a8107c"/>
<rect x="160" y="548" width="1" height="1" fill="#a8107c"/>
<rect x="160" y="268" width="1" height="1" fill="#ff9070"/>
<rect x="160" y="305" width="1" height="1" fill="#ff9070"/>
<rect x="160" y="342" width="1" height="1" fill="#ff9070"/>
<rect x="160" y="379" width="1" height="1" fill="#ff9070"/>
<rect x="160" y="416" width="1" height="1" fill="#ff9070"/>
<rect x="160" y="453" width="1" height="1" fill="#ff9070"/>
<rect x="160" y="490" width="1" height="1" fill="#ff9070"/>
<rect x="160" y="527" width="1" height="1" fill="#ff9070"/>
<rect x="205" y="262" width="1" height="1" fill="#a8107c"/>
<rect x="205" y="275" width="1" height="1" fill="#a8107c"/>
<rect x="205" y="288" width="1" height="1" fill="#a8107c"/>
<rect x="205" y="301" width="1" height="1" fill="#a8107c"/>
<rect x="205" y="314" width="1" height="1" fill="#a8107c"/>
<rect x="205" y="327" width="1" height="1" fill="#a8107c"/>
<rect x="205" y="340" width="1" height="1" fill="#a8107c"/>
<rect x="205" y="353" width="1" height="1" fill="#a8107c"/>
<rect x="205" y="366" width="1" height="1" fill="#a8107c"/>
<rect x="205" y="379" width="1" height="1" fill="#a8107c"/>
<rect x="205" y="392" width="1" height="1" fill="#a8107c"/>
<rect x="205" y="405" width="1" height="1" fill="#a8107c"/>
<rect x="205" y="418" width="1" height="1" fill="#a8107c"/>
<rect x="205" y="431" width="1" height="1" fill="#a8107c"/>
<rect x="205" y="444" width="1" height="1" fill="#a8107c"/>
<rect x="205" y="457" width="1" height="1" fill="#a8107c"/>
<rect x="205" y="470" width="1" height="1" fill="#a8107c"/>
<rect x="205" y="483" width="1" height="1" fill="#a8107c"/>
<rect x="205" y="496" width="1" height="1" fill="#a8107c"/>
<rect x="205" y="509" width="1" height="1" fill="#a8107c"/>
<rect x="205" y="522" width="1" height="1" fill="#a8107c"/>
<rect x="205" y="535" width="1" height="1" fill="#a8107c"/>
<rect x="205" y="548" width="1" height="1" fill="#a8107c"/>
<rect x="205" y="268" width="1" height="1" fill="#ff9070"/>
<rect x="205" y="305" width="1" height="1" fill="#ff9070"/>
<rect x="205" y="342" width="1" height="1" fill="#ff9070"/>
<rect x="205" y="379" width="1" height="1" fill="#ff9070"/>
<rect x="205" y="416" width="1" height="1" fill="#ff9070"/>
<rect x="205" y="453" width="1" height="1" fill="#ff9070"/>
<rect x="205" y="490" width="1" height="1" fill="#ff9070"/>
<rect x="205" y="527" width="1" height="1" fill="#ff9070"/>
<rect x="459" y="262" width="1" height="1" fill="#a8107c"/>
<rect x="459" y="275" width="1" height="1" fill="#a8107c"/>
<rect x="459" y="288" width="1" height="1" fill="#a8107c"/>
<rect x="459" y="301" width="1" height="1" fill="#a8107c"/>
<rect x="459" y="314" width="1" height="1" fill="#a8107c"/>
<rect x="459" y="327" width="1" height="1" fill="#a8107c"/>
<rect x="459" y="340" width="1" height="1" fill="#a8107c"/>
<rect x="459" y="353" width="1" height="1" fill="#a8107c"/>
<rect x="459" y="366" width="1" height="1" fill="#a8107c"/>
<rect x="459" y="379" width="1" height="1" fill="#a8107c"/>
<rect x="459" y="392" width="1" height="1" fill="#a8107c"/>
<rect x="459" y="405" width="1" height="1" fill="#a8107c"/>
<rect x="459" y="418" width="1" height="1" fill="#a8107c"/>
<rect x="459" y="431" width="1" height="1" fill="#a8107c"/>
<rect x="459" y="444" width="1" height="1" fill="#a8107c"/>
<rect x="459" y="457" width="1" height="1" fill="#a8107c"/>
<rect x="459" y="470" width="1" height="1" fill="#a8107c"/>
<rect x="459" y="483" width="1" height="1" fill="#a8107c"/>
<rect x="459" y="496" width="1" height="1" fill="#a8107c"/>
<rect x="459" y="509" width="1" height="1" fill="#a8107c"/>
<rect x="459" y="522" width="1" height="1" fill="#a8107c"/>
<rect x="459" y="535" width="1" height="1" fill="#a8107c"/>
<rect x="459" y="548" width="1" height="1" fill="#a8107c"/>
<rect x="459" y="268" width="1" height="1" fill="#ff9070"/>
<rect x="459" y="305" width="1" height="1" fill="#ff9070"/>
<rect x="459" y="342" width="1" height="1" fill="#ff9070"/>
<rect x="459" y="379" width="1" height="1" fill="#ff9070"/>
<rect x="459" y="416" width="1" height="1" fill="#ff9070"/>
<rect x="459" y="453" width="1" height="1" fill="#ff9070"/>
<rect x="459" y="490" width="1" height="1" fill="#ff9070"/>
<rect x="459" y="527" width="1" height="1" fill="#ff9070"/>
<rect x="504" y="262" width="1" height="1" fill="#a8107c"/>
<rect x="504" y="275" width="1" height="1" fill="#a8107c"/>
<rect x="504" y="288" width="1" height="1" fill="#a8107c"/>
<rect x="504" y="301" width="1" height="1" fill="#a8107c"/>
<rect x="504" y="314" width="1" height="1" fill="#a8107c"/>
<rect x="504" y="327" width="1" height="1" fill="#a8107c"/>
<rect x="504" y="340" width="1" height="1" fill="#a8107c"/>
<rect x="504" y="353" width="1" height="1" fill="#a8107c"/>
<rect x="504" y="366" width="1" height="1" fill="#a8107c"/>
<rect x="504" y="379" width="1" height="1" fill="#a8107c"/>
<rect x="504" y="392" width="1" height="1" fill="#a8107c"/>
<rect x="504" y="405" width="1" height="1" fill="#a8107c"/>
<rect x="504" y="418" width="1" height="1" fill="#a8107c"/>
<rect x="504" y="431" width="1" height="1" fill="#a8107c"/>
<rect x="504" y="444" width="1" height="1" fill="#a8107c"/>
<rect x="504" y="457" width="1" height="1" fill="#a8107c"/>
<rect x="504" y="470" width="1" height="1" fill="#a8107c"/>
<rect x="504" y="483" width="1" height="1" fill="#a8107c"/>
<rect x="504" y="496" width="1" height="1" fill="#a8107c"/>
<rect x="504" y="509" width="1" height="1" fill="#a8107c"/>
<rect x="504" y="522" width="1" height="1" fill="#a8107c"/>
<rect x="504" y="535" width="1" height="1" fill="#a8107c"/>
<rect x="504" y="548" width="1" height="1" fill="#a8107c"/>
<rect x="504" y="268" width="1" height="1" fill="#ff9070"/>
<rect x="504" y="305" width="1" height="1" fill="#ff9070"/>
<rect x="504" y="342" width="1" height="1" fill="#ff9070"/>
<rect x="504" y="379" width="1" height="1" fill="#ff9070"/>
<rect x="504" y="416" width="1" height="1" fill="#ff9070"/>
<rect x="504" y="453" width="1" height="1" fill="#ff9070"/>
<rect x="504" y="490" width="1" height="1" fill="#ff9070"/>
<rect x="504" y="527" width="1" height="1" fill="#ff9070"/>
<rect x="543" y="262" width="1" height="1" fill="#a8107c"/>
<rect x="543" y="275" width="1" height="1" fill="#a8107c"/>
<rect x="543" y="288" width="1" height="1" fill="#a8107c"/>
<rect x="543" y="301" width="1" height="1" fill="#a8107c"/>
<rect x="543" y="314" width="1" height="1" fill="#a8107c"/>
<rect x="543" y="327" width="1" height="1" fill="#a8107c"/>
<rect x="543" y="340" width="1" height="1" fill="#a8107c"/>
<rect x="543" y="353" width="1" height="1" fill="#a8107c"/>
<rect x="543" y="366" width="1" height="1" fill="#a8107c"/>
<rect x="543" y="379" width="1" height="1" fill="#a8107c"/>
<rect x="543" y="392" width="1" height="1" fill="#a8107c"/>
<rect x="543" y="405" width="1" height="1" fill="#a8107c"/>
<rect x="543" y="418" width="1" height="1" fill="#a8107c"/>
<rect x="543" y="431" width="1" height="1" fill="#a8107c"/>
<rect x="543" y="444" width="1" height="1" fill="#a8107c"/>
<rect x="543" y="457" width="1" height="1" fill="#a8107c"/>
<rect x="543" y="470" width="1" height="1" fill="#a8107c"/>
<rect x="543" y="483" width="1" height="1" fill="#a8107c"/>
<rect x="543" y="496" width="1" height="1" fill="#a8107c"/>
<rect x="543" y="509" width="1" height="1" fill="#a8107c"/>
<rect x="543" y="522" width="1" height="1" fill="#a8107c"/>
<rect x="543" y="535" width="1" height="1" fill="#a8107c"/>
<rect x="543" y="548" width="1" height="1" fill="#a8107c"/>
<rect x="543" y="268" width="1" height="1" fill="#ff9070"/>
<rect x="543" y="305" width="1" height="1" fill="#ff9070"/>
<rect x="543" y="342" width="1" height="1" fill="#ff9070"/>
<rect x="543" y="379" width="1" height="1" fill="#ff9070"/>
<rect x="543" y="416" width="1" height="1" fill="#ff9070"/>
<rect x="543" y="453" width="1" height="1" fill="#ff9070"/>
<rect x="543" y="490" width="1" height="1" fill="#ff9070"/>
<rect x="543" y="527" width="1" height="1" fill="#ff9070"/>
<rect x="591" y="262" width="1" height="1" fill="#a8107c"/>
<rect x="591" y="275" width="1" height="1" fill="#a8107c"/>
<rect x="591" y="288" width="1" height="1" fill="#a8107c"/>
<rect x="591" y="301" width="1" height="1" fill="#a8107c"/>
<rect x="591" y="314" width="1" height="1" fill="#a8107c"/>
<rect x="591" y="327" width="1" height="1" fill="#a8107c"/>
<rect x="591" y="340" width="1" height="1" fill="#a8107c"/>
<rect x="591" y="353" width="1" height="1" fill="#a8107c"/>
<rect x="591" y="366" width="1" height="1" fill="#a8107c"/>
<rect x="591" y="379" width="1" height="1" fill="#a8107c"/>
<rect x="591" y="392" width="1" height="1" fill="#a8107c"/>
<rect x="591" y="405" width="1" height="1" fill="#a8107c"/>
<rect x="591" y="418" width="1" height="1" fill="#a8107c"/>
<rect x="591" y="431" width="1" height="1" fill="#a8107c"/>
<rect x="591" y="444" width="1" height="1" fill="#a8107c"/>
<rect x="591" y="457" width="1" height="1" fill="#a8107c"/>
<rect x="591" y="470" width="1" height="1" fill="#a8107c"/>
<rect x="591" y="483" width="1" height="1" fill="#a8107c"/>
<rect x="591" y="496" width="1" height="1" fill="#a8107c"/>
<rect x="591" y="509" width="1" height="1" fill="#a8107c"/>
<rect x="591" y="522" width="1" height="1" fill="#a8107c"/>
<rect x="591" y="535" width="1" height="1" fill="#a8107c"/>
<rect x="591" y="548" width="1" height="1" fill="#a8107c"/>
<rect x="591" y="268" width="1" height="1" fill="#ff9070"/>
<rect x="591" y="305" width="1" height="1" fill="#ff9070"/>
<rect x="591" y="342" width="1" height="1" fill="#ff9070"/>
<rect x="591" y="379" width="1" height="1" fill="#ff9070"/>
<rect x="591" y="416" width="1" height="1" fill="#ff9070"/>
<rect x="591" y="453" width="1" height="1" fill="#ff9070"/>
<rect x="591" y="490" width="1" height="1" fill="#ff9070"/>
<rect x="591" y="527" width="1" height="1" fill="#ff9070"/>
<rect x="635" y="262" width="1" height="1" fill="#a8107c"/>
<rect x="635" y="275" width="1" height="1" fill="#a8107c"/>
<rect x="635" y="288" width="1" height="1" fill="#a8107c"/>
<rect x="635" y="301" width="1" height="1" fill="#a8107c"/>
<rect x="635" y="314" width="1" height="1" fill="#a8107c"/>
<rect x="635" y="327" width="1" height="1" fill="#a8107c"/>
<rect x="635" y="340" width="1" height="1" fill="#a8107c"/>
<rect x="635" y="353" width="1" height="1" fill="#a8107c"/>
<rect x="635" y="366" width="1" height="1" fill="#a8107c"/>
<rect x="635" y="379" width="1" height="1" fill="#a8107c"/>
<rect x="635" y="392" width="1" height="1" fill="#a8107c"/>
<rect x="635" y="405" width="1" height="1" fill="#a8107c"/>
<rect x="635" y="418" width="1" height="1" fill="#a8107c"/>
<rect x="635" y="431" width="1" height="1" fill="#a8107c"/>
<rect x="635" y="444" width="1" height="1" fill="#a8107c"/>
<rect x="635" y="457" width="1" height="1" fill="#a8107c"/>
<rect x="635" y="470" width="1" height="1" fill="#a8107c"/>
<rect x="635" y="483" width="1" height="1" fill="#a8107c"/>
<rect x="635" y="496" width="1" height="1" fill="#a8107c"/>
<rect x="635" y="509" width="1" height="1" fill="#a8107c"/>
<rect x="635" y="522" width="1" height="1" fill="#a8107c"/>
<rect x="635" y="535" width="1" height="1" fill="#a8107c"/>
<rect x="635" y="548" width="1" height="1" fill="#a8107c"/>
<rect x="635" y="268" width="1" height="1" fill="#ff9070"/>
<rect x="635" y="305" width="1" height="1" fill="#ff9070"/>
<rect x="635" y="342" width="1" height="1" fill="#ff9070"/>
<rect x="635" y="379" width="1" height="1" fill="#ff9070"/>
<rect x="635" y="416" width="1" height="1" fill="#ff9070"/>
<rect x="635" y="453" width="1" height="1" fill="#ff9070"/>
<rect x="635" y="490" width="1" height="1" fill="#ff9070"/>
<rect x="635" y="527" width="1" height="1" fill="#ff9070"/>
<rect x="717" y="262" width="1" height="1" fill="#a8107c"/>
<rect x="717" y="275" width="1" height="1" fill="#a8107c"/>
<rect x="717" y="288" width="1" height="1" fill="#a8107c"/>
<rect x="717" y="301" width="1" height="1" fill="#a8107c"/>
<rect x="717" y="314" width="1" height="1" fill="#a8107c"/>
<rect x="717" y="327" width="1" height="1" fill="#a8107c"/>
<rect x="717" y="340" width="1" height="1" fill="#a8107c"/>
<rect x="717" y="353" width="1" height="1" fill="#a8107c"/>
<rect x="717" y="366" width="1" height="1" fill="#a8107c"/>
<rect x="717" y="379" width="1" height="1" fill="#a8107c"/>
<rect x="717" y="392" width="1" height="1" fill="#a8107c"/>
<rect x="717" y="405" width="1" height="1" fill="#a8107c"/>
<rect x="717" y="418" width="1" height="1" fill="#a8107c"/>
<rect x="717" y="431" width="1" height="1" fill="#a8107c"/>
<rect x="717" y="444" width="1" height="1" fill="#a8107c"/>
<rect x="717" y="457" width="1" height="1" fill="#a8107c"/>
<rect x="717" y="470" width="1" height="1" fill="#a8107c"/>
<rect x="717" y="483" width="1" height="1" fill="#a8107c"/>
<rect x="717" y="496" width="1" height="1" fill="#a8107c"/>
<rect x="717" y="509" width="1" height="1" fill="#a8107c"/>
<rect x="717" y="522" width="1" height="1" fill="#a8107c"/>
<rect x="717" y="535" width="1" height="1" fill="#a8107c"/>
<rect x="717" y="548" width="1" height="1" fill="#a8107c"/>
<rect x="717" y="268" width="1" height="1" fill="#ff9070"/>
<rect x="717" y="305" width="1" height="1" fill="#ff9070"/>
<rect x="717" y="342" width="1" height="1" fill="#ff9070"/>
<rect x="717" y="379" width="1" height="1" fill="#ff9070"/>
<rect x="717" y="416" width="1" height="1" fill="#ff9070"/>
<rect x="717" y="453" width="1" height="1" fill="#ff9070"/>
<rect x="717" y="490" width="1" height="1" fill="#ff9070"/>
<rect x="717" y="527" width="1" height="1" fill="#ff9070"/>
<rect x="672" y="266" width="1" height="1" fill="#a8107c"/>
<rect x="672" y="277" width="1" height="1" fill="#a8107c"/>
<rect x="672" y="288" width="1" height="1" fill="#a8107c"/>
<rect x="672" y="299" width="1" height="1" fill="#a8107c"/>
<rect x="672" y="310" width="1" height="1" fill="#a8107c"/>
<rect x="672" y="321" width="1" height="1" fill="#a8107c"/>
<rect x="672" y="332" width="1" height="1" fill="#a8107c"/>
<rect x="672" y="343" width="1" height="1" fill="#a8107c"/>
<rect x="672" y="354" width="1" height="1" fill="#a8107c"/>
<rect x="672" y="365" width="1" height="1" fill="#a8107c"/>
<rect x="672" y="376" width="1" height="1" fill="#a8107c"/>
<rect x="672" y="387" width="1" height="1" fill="#a8107c"/>
<rect x="672" y="398" width="1" height="1" fill="#a8107c"/>
<rect x="672" y="409" width="1" height="1" fill="#a8107c"/>
<rect x="672" y="420" width="1" height="1" fill="#a8107c"/>
<rect x="672" y="431" width="1" height="1" fill="#a8107c"/>
<rect x="672" y="442" width="1" height="1" fill="#a8107c"/>
<rect x="672" y="453" width="1" height="1" fill="#a8107c"/>
<rect x="672" y="464" width="1" height="1" fill="#a8107c"/>
<rect x="672" y="475" width="1" height="1" fill="#a8107c"/>
<rect x="672" y="486" width="1" height="1" fill="#a8107c"/>
<rect x="672" y="497" width="1" height="1" fill="#a8107c"/>
<rect x="672" y="508" width="1" height="1" fill="#a8107c"/>
<rect x="672" y="519" width="1" height="1" fill="#a8107c"/>
<rect x="672" y="530" width="1" height="1" fill="#a8107c"/>
<rect x="672" y="541" width="1" height="1" fill="#a8107c"/>
<rect x="672" y="552" width="1" height="1" fill="#a8107c"/>
<rect x="675" y="266" width="1" height="1" fill="#a8107c"/>
<rect x="675" y="277" width="1" height="1" fill="#a8107c"/>
<rect x="675" y="288" width="1" height="1" fill="#a8107c"/>
<rect x="675" y="299" width="1" height="1" fill="#a8107c"/>
<rect x="675" y="310" width="1" height="1" fill="#a8107c"/>
<rect x="675" y="321" width="1" height="1" fill="#a8107c"/>
<rect x="675" y="332" width="1" height="1" fill="#a8107c"/>
<rect x="675" y="343" width="1" height="1" fill="#a8107c"/>
<rect x="675" y="354" width="1" height="1" fill="#a8107c"/>
<rect x="675" y="365" width="1" height="1" fill="#a8107c"/>
<rect x="675" y="376" width="1" height="1" fill="#a8107c"/>
<rect x="675" y="387" width="1" height="1" fill="#a8107c"/>
<rect x="675" y="398" width="1" height="1" fill="#a8107c"/>
<rect x="675" y="409" width="1" height="1" fill="#a8107c"/>
<rect x="675" y="420" width="1" height="1" fill="#a8107c"/>
<rect x="675" y="431" width="1" height="1" fill="#a8107c"/>
<rect x="675" y="442" width="1" height="1" fill="#a8107c"/>
<rect x="675" y="453" width="1" height="1" fill="#a8107c"/>
<rect x="675" y="464" width="1" height="1" fill="#a8107c"/>
<rect x="675" y="475" width="1" height="1" fill="#a8107c"/>
<rect x="675" y="486" width="1" height="1" fill="#a8107c"/>
<rect x="675" y="497" width="1" height="1" fill="#a8107c"/>
<rect x="675" y="508" width="1" height="1" fill="#a8107c"/>
<rect x="675" y="519" width="1" height="1" fill="#a8107c"/>
<rect x="675" y="530" width="1" height="1" fill="#a8107c"/>
<rect x="675" y="541" width="1" height="1" fill="#a8107c"/>
<rect x="675" y="552" width="1" height="1" fill="#a8107c"/>
<rect x="721" y="266" width="1" height="1" fill="#a8107c"/>
<rect x="721" y="277" width="1" height="1" fill="#a8107c"/>
<rect x="721" y="288" width="1" height="1" fill="#a8107c"/>
<rect x="721" y="299" width="1" height="1" fill="#a8107c"/>
<rect x="721" y="310" width="1" height="1" fill="#a8107c"/>
<rect x="721" y="321" width="1" height="1" fill="#a8107c"/>
<rect x="721" y="332" width="1" height="1" fill="#a8107c"/>
<rect x="721" y="343" width="1" height="1" fill="#a8107c"/>
<rect x="721" y="354" width="1" height="1" fill="#a8107c"/>
<rect x="721" y="365" width="1" height="1" fill="#a8107c"/>
<rect x="721" y="376" width="1" height="1" fill="#a8107c"/>
<rect x="721" y="387" width="1" height="1" fill="#a8107c"/>
<rect x="721" y="398" width="1" height="1" fill="#a8107c"/>
<rect x="721" y="409" width="1" height="1" fill="#a8107c"/>
<rect x="721" y="420" width="1" height="1" fill="#a8107c"/>
<rect x="721" y="431" width="1" height="1" fill="#a8107c"/>
<rect x="721" y="442" width="1" height="1" fill="#a8107c"/>
<rect x="721" y="453" width="1" height="1" fill="#a8107c"/>
<rect x="721" y="464" width="1" height="1" fill="#a8107c"/>
<rect x="721" y="475" width="1" height="1" fill="#a8107c"/>
<rect x="721" y="486" width="1" height="1" fill="#a8107c"/>
<rect x="721" y="497" width="1" height="1" fill="#a8107c"/>
<rect x="721" y="508" width="1" height="1" fill="#a8107c"/>
<rect x="721" y="519" width="1" height="1" fill="#a8107c"/>
<rect x="721" y="530" width="1" height="1" fill="#a8107c"/>
<rect x="721" y="541" width="1" height="1" fill="#a8107c"/>
<rect x="721" y="552" width="1" height="1" fill="#a8107c"/>
<rect x="85" y="545" width="1" height="10" fill="#d03090"/>
<rect x="87" y="545" width="1" height="10" fill="#d03090"/>
<rect x="89" y="545" width="1" height="10" fill="#d03090"/>
<rect x="91" y="545" width="1" height="10" fill="#d03090"/>
<rect x="93" y="545" width="1" height="10" fill="#d03090"/>
<rect x="95" y="545" width="1" height="10" fill="#d03090"/>
<rect x="86" y="542" width="1" height="1" fill="#ff90b0"/>
<rect x="88" y="542" width="1" height="1" fill="#ff90b0"/>
<rect x="90" y="542" width="1" height="1" fill="#ff90b0"/>
<rect x="92" y="542" width="1" height="1" fill="#ff90b0"/>
<rect x="94" y="542" width="1" height="1" fill="#ff90b0"/>
<rect x="789" y="262" width="1" height="10" fill="#ff90b0"/>
<rect x="789" y="546" width="1" height="10" fill="#ff90b0"/>
<rect x="791" y="262" width="1" height="10" fill="#ff90b0"/>
<rect x="791" y="546" width="1" height="10" fill="#ff90b0"/>
<rect x="793" y="262" width="1" height="10" fill="#ff90b0"/>
<rect x="793" y="546" width="1" height="10" fill="#ff90b0"/>
</svg>

<!-- right panel -->
<div class="a" style="left:880px;top:51px;width:156px;height:9px;background:#efefef;border-left:1px solid #fafafa"></div><div class="a" style="left:881px;top:52px;width:154px;height:7px;background:#8c9cbf;border-top:1px solid #c8d4ee;border-left:1px solid #c8d4ee;border-bottom:1px solid #55607a"></div>

<div class="a" style="left:880px;top:60px;width:156px;height:34px;border-top:1px solid #8a8a8a;border-left:1px solid #8a8a8a;border-right:1px solid #fff;border-bottom:1px solid #fff"></div>
<div class="a" style="left:881px;top:61px;width:154px;height:32px;border-top:2px solid #fff;border-left:2px solid #fff;border-right:2px solid #8a8a8a;border-bottom:2px solid #8a8a8a;background:#efefef"></div>
<div class="a" style="left:931px;top:70px;font-size:12px;line-height:14px;letter-spacing:0.2px">All Colors</div>
<div class="a" style="left:880px;top:95px;width:156px;height:10px;border-top:1px solid #8a8a8a;border-left:1px solid #8a8a8a;border-right:1px solid #fff;border-bottom:1px solid #fff;background:#efefef"></div>
<div class="a" style="left:881px;top:96px;width:78px;height:8px;border-top:1px solid #8a8a8a;border-left:1px solid #8a8a8a;border-bottom:1px solid #fff;background:#efefef"></div>
<div class="a" style="left:959px;top:96px;width:76px;height:8px;border-top:1px solid #fff;border-right:2px solid #8a8a8a;border-bottom:2px solid #8a8a8a;background:#efefef"></div>
<div class="a lst" style="left:978px;top:107px">V</div>
<div class="a lst" style="left:1000px;top:107px">S</div>
<div class="a" style="left:880px;top:119px;width:140px;height:504px;border-top:1px solid #8a8a8a;border-left:1px solid #8a8a8a;border-right:1px solid #fff;border-bottom:1px solid #fff;background:#efefef"></div>
<div class="a" style="left:881px;top:138px;width:138px;height:1px;background:#8a8a8a"></div>
<div class="a" style="left:881px;top:139px;width:138px;height:1px;background:#fff"></div>
<div class="a lst" style="left:882px;top:122px">FPlan View</div>
<div class="a cb" style="left:977px;top:124px"></div>
<div class="a cb" style="left:999px;top:124px"></div>
<div class="a lst" style="left:882px;top:142px">Module</div>
<div class="a cb" style="left:977px;top:144px"></div>
<div class="a cb" style="left:999px;top:144px"></div>
<div class="a lst" style="left:882px;top:160px">Fence</div>
<div class="a cb" style="left:977px;top:162px"></div>
<div class="a cb" style="left:999px;top:162px"></div>
<div class="a lst" style="left:882px;top:178px">Guide</div>
<div class="a cb" style="left:977px;top:180px"></div>
<div class="a cb" style="left:999px;top:180px"></div>
<div class="a lst" style="left:882px;top:196px">Obstruct</div>
<div class="a cb" style="left:977px;top:198px"></div>
<div class="a cb" style="left:999px;top:198px"></div>
<div class="a lst" style="left:882px;top:214px">Region</div>
<div class="a cb" style="left:977px;top:216px"></div>
<div class="a cb" style="left:999px;top:216px"></div>
<div class="a lst" style="left:882px;top:232px">Area Density</div>
<div class="a cb" style="left:977px;top:234px"></div>
<div class="a cb" style="left:999px;top:234px"></div>
<div class="a lst" style="left:882px;top:250px">Instance</div>
<div class="a cb" style="left:977px;top:252px"></div>
<div class="a cb" style="left:999px;top:252px"></div>
<div class="a lst" style="left:882px;top:268px">Std. Cell</div>
<div class="a cb" style="left:977px;top:270px"></div>
<div class="a cb" style="left:999px;top:270px"></div>
<div class="a lst" style="left:882px;top:286px">Cover Cell</div>
<div class="a cb" style="left:977px;top:288px"></div>
<div class="a cb" style="left:999px;top:288px"></div>
<div class="a lst" style="left:882px;top:304px">Block</div>
<div class="a cb" style="left:977px;top:306px"></div>
<div class="a cb" style="left:999px;top:306px"></div>
<div class="a lst" style="left:882px;top:322px">IO Cell</div>
<div class="a cb" style="left:977px;top:324px"></div>
<div class="a cb" style="left:999px;top:324px"></div>
<div class="a lst" style="left:882px;top:340px">Area IO Cell</div>
<div class="a cb" style="left:977px;top:342px"></div>
<div class="a cb" style="left:999px;top:342px"></div>
<div class="a lst" style="left:882px;top:358px">Net</div>
<div class="a cb" style="left:977px;top:360px"></div>
<div class="a cbo" style="left:999px;top:360px"></div>
<div class="a lst" style="left:882px;top:376px">Special Net</div>
<div class="a cb" style="left:977px;top:378px"></div>
<div class="a cb" style="left:999px;top:378px"></div>
<div class="a lst" style="left:882px;top:394px">Terminal</div>
<div class="a cb" style="left:977px;top:396px"></div>
<div class="a cb" style="left:999px;top:396px"></div>
<div class="a lst" style="left:882px;top:412px">Ruler</div>
<div class="a cb" style="left:977px;top:414px"></div>
<div class="a lst" style="left:882px;top:430px">Text</div>
<div class="a cb" style="left:977px;top:432px"></div>
<div class="a lst" style="left:882px;top:448px">Rel. FPlan</div>
<div class="a cb" style="left:977px;top:450px"></div>
<div class="a lst" style="left:882px;top:466px">Yield Cell</div>
<div class="a cbo" style="left:977px;top:468px"></div>
<div class="a lst" style="left:882px;top:484px">Yield Map</div>
<div class="a cbo" style="left:977px;top:486px"></div>
<div class="a lst" style="left:882px;top:502px">SDP Connect</div>
<div class="a cb" style="left:977px;top:504px"></div>
<div class="a lst" style="left:882px;top:520px">Density Map</div>
<div class="a cbo" style="left:977px;top:522px"></div>
<div class="a" style="left:1022px;top:119px;width:14px;height:504px;background:#8a8a8a;border-right:1px solid #fff;border-bottom:1px solid #fff"></div>
<div class="a" style="left:1024px;top:133px;width:10px;height:474px;border-top:2px solid #fff;border-left:2px solid #fff;border-right:2px solid #6a6a6a;border-bottom:2px solid #6a6a6a;background:#c4c4c4"></div>
<svg class="a" style="left:1022px;top:119px" width="14" height="504"><path d="M7 2 L12 12 L2 12 Z" fill="#8a8a8a"/><path d="M7 3 L3 12" stroke="#fff" stroke-width="1.5"/><path d="M7 3 L11 12 L3 12" stroke="#6a6a6a" fill="none" stroke-width="1"/><path d="M2 490 L12 490 L7 500 Z" fill="#8a8a8a"/><path d="M2.5 490.5 L7 499" stroke="#fff" stroke-width="1.5"/><path d="M2 490 L12 490" stroke="#fff" stroke-width="1"/></svg>
<div class="a" style="left:880px;top:625px;width:104px;height:104px;border-top:1px solid #999;border-left:1px solid #999;background:#fff"></div>
<svg class="a" style="left:880px;top:625px" width="104" height="104"><rect x="9.5" y="9.5" width="86" height="86" fill="#ffff00" stroke="#000" stroke-width="1"/><rect x="4" y="1" width="2" height="102" fill="#e000e0"/><rect x="98" y="1" width="2" height="102" fill="#e000e0"/><path d="M16 1 L88 103 M88 1 L16 103" stroke="#d02070" stroke-width="1"/></svg>
<svg class="a" style="left:956px;top:138px" width="22" height="400" viewBox="956 138 22 400" shape-rendering="crispEdges"><defs>
<pattern id="pmod" width="2" height="2" patternUnits="userSpaceOnUse"><rect width="2" height="2" fill="#fbeefb"/><rect width="1" height="1" fill="#d8b0d8"/><rect x="1" y="1" width="1" height="1" fill="#d8b0d8"/></pattern>
<pattern id="pfen" width="2" height="2" patternUnits="userSpaceOnUse"><rect width="2" height="2" fill="#fff0e0"/><rect width="1" height="1" fill="#d89c78"/><rect x="1" y="1" width="1" height="1" fill="#d89c78"/></pattern>
<pattern id="preg" width="2" height="2" patternUnits="userSpaceOnUse"><rect width="2" height="2" fill="#fff4e8"/><rect width="1" height="1" fill="#e0b090"/><rect x="1" y="1" width="1" height="1" fill="#e0b090"/></pattern>
<pattern id="pterm" width="2" height="2" patternUnits="userSpaceOnUse"><rect width="2" height="2" fill="#f8f0c0"/><rect width="1" height="1" fill="#d8c060"/><rect x="1" y="1" width="1" height="1" fill="#d8c060"/></pattern>
<pattern id="pnav" width="2" height="2" patternUnits="userSpaceOnUse"><rect width="2" height="2" fill="#ffffff"/><rect width="1" height="1" fill="#000070"/><rect x="1" y="1" width="1" height="1" fill="#000070"/></pattern>
<pattern id="pinst" width="4" height="4" patternUnits="userSpaceOnUse"><rect width="4" height="4" fill="#fff"/><rect x="1" y="1" width="1" height="1" fill="#508888"/><rect x="3" y="3" width="1" height="1" fill="#508888"/><rect x="3" y="1" width="1" height="1" fill="#d8f0f0"/><rect x="1" y="3" width="1" height="1" fill="#d8f0f0"/></pattern>
<pattern id="pblk" width="2" height="2" patternUnits="userSpaceOnUse"><rect width="2" height="2" fill="#c8f0f0"/><rect width="1" height="1" fill="#70b8b8"/><rect x="1" y="1" width="1" height="1" fill="#70b8b8"/></pattern>
<pattern id="psn" width="4" height="4" patternUnits="userSpaceOnUse"><rect width="4" height="4" fill="#fafafa"/><rect x="1" y="1" width="1" height="1" fill="#d0d0d0"/></pattern>
</defs>
<rect x="958" y="140" width="18" height="18" fill="#f8e0f8"/><rect x="959" y="141" width="16" height="16" fill="url(#pmod)"/>
<rect x="958" y="158" width="18" height="18" fill="#ffeadc"/><rect x="959" y="159" width="16" height="16" fill="url(#pfen)"/>
<rect x="958" y="176" width="18" height="18" fill="#f8e0f8"/><rect x="959" y="177" width="16" height="16" fill="url(#pmod)"/>
<rect x="958" y="194" width="18" height="18" fill="#f8e0e0"/><rect x="959" y="195" width="16" height="16" fill="#a0282a"/><rect x="959" y="195" width="16" height="1" fill="#802020"/>
<rect x="958" y="212" width="18" height="18" fill="#ffeadc"/><rect x="959" y="213" width="16" height="16" fill="url(#preg)"/>
<rect x="959" y="231" width="16" height="16" fill="#f0f0f0" stroke="#f8d8d8" stroke-width="1"/><rect x="959" y="231" width="16" height="1" fill="#f8d8d8"/><rect x="959" y="246" width="16" height="1" fill="#f8d8d8"/><rect x="959" y="231" width="1" height="16" fill="#f8d8d8"/><rect x="974" y="231" width="1" height="16" fill="#f8d8d8"/><rect x="967" y="231" width="1" height="16" fill="#f8d8d8"/><rect x="959" y="236" width="16" height="1" fill="#f8d8d8"/><rect x="959" y="244" width="16" height="1" fill="#f8d8d8"/>
<rect x="958" y="248" width="18" height="18" fill="#b0f4f4"/><rect x="959" y="249" width="16" height="16" fill="#40a0a0"/><rect x="960" y="250" width="14" height="14" fill="url(#pinst)"/>
<rect x="958" y="266" width="18" height="18" fill="#b0f4f4"/><rect x="959" y="267" width="16" height="16" fill="#40a0a0"/><rect x="960" y="268" width="14" height="14" fill="url(#pinst)"/>
<rect x="958" y="284" width="18" height="18" fill="#b0f4f4"/><rect x="959" y="285" width="16" height="16" fill="#40a0a0"/><rect x="960" y="286" width="14" height="14" fill="url(#pinst)"/>
<rect x="958" y="302" width="18" height="18" fill="#c0f4f4"/><rect x="959" y="303" width="16" height="16" fill="url(#pblk)"/>
<rect x="958" y="320" width="18" height="18" fill="#b0f4f4"/><rect x="959" y="321" width="16" height="16" fill="#40a0a0"/><rect x="960" y="322" width="14" height="14" fill="url(#pinst)"/>
<rect x="958" y="338" width="18" height="18" fill="#b0f4f4"/><rect x="959" y="339" width="16" height="16" fill="#40a0a0"/><rect x="960" y="340" width="14" height="14" fill="url(#pinst)"/>
<rect x="958" y="356" width="18" height="18" fill="#f4f4ff"/><rect x="959" y="357" width="16" height="16" fill="#000090"/><rect x="961" y="359" width="12" height="12" fill="#efefef"/>
<rect x="959" y="375" width="16" height="16" fill="url(#psn)"/>
<rect x="958" y="392" width="18" height="18" fill="#fff8d8"/><rect x="959" y="393" width="16" height="16" fill="url(#pterm)"/>
<rect x="959" y="411" width="16" height="16" fill="#ffff80"/><rect x="961" y="413" width="12" height="12" fill="#efefef"/>
<rect x="959" y="429" width="16" height="16" fill="#fff"/><rect x="961" y="431" width="12" height="12" fill="#efefef"/>
<rect x="958" y="446" width="18" height="18" fill="#fcfcb0"/><rect x="959" y="447" width="16" height="16" fill="#ffff00"/>
<rect x="958" y="464" width="18" height="18" fill="#f0f0ff"/><rect x="959" y="465" width="16" height="16" fill="#000060"/><rect x="960" y="466" width="14" height="14" fill="url(#pnav)"/>
<rect x="958" y="482" width="18" height="18" fill="#f0f0ff"/><rect x="959" y="483" width="16" height="16" fill="#000060"/><rect x="960" y="484" width="14" height="14" fill="url(#pnav)"/>
<rect x="958" y="500" width="18" height="18" fill="#fcfcb0"/><rect x="959" y="501" width="16" height="16" fill="#ffff00"/>
<rect x="958" y="518" width="18" height="18" fill="#f0f0ff"/><rect x="959" y="519" width="16" height="16" fill="#000060"/><rect x="960" y="520" width="14" height="14" fill="url(#pnav)"/>
</svg>
<!-- status bar -->
<div class="a handle" style="left:4px;top:702px;width:7px;height:27px"></div>
<div class="a" style="left:13px;top:704px;width:633px;height:22px;border-top:2px solid #8a8a8a;border-left:2px solid #8a8a8a;border-bottom:1px solid #fff;border-right:1px solid #fff;background:#fff"></div>
<div class="a btn" style="left:649px;top:702px;width:37px;height:27px"></div>
<div class="a" style="left:662px;top:708px;font-size:12px;line-height:14px">Q</div>
<div class="a" style="left:733px;top:708px;font-size:12px;line-height:14px">(</div>
<div class="a" style="left:756px;top:708px;font-size:12px;line-height:14px;letter-spacing:0.1px">501.452</div>
<div class="a" style="left:804px;top:708px;font-size:12px;line-height:14px">,</div>
<div class="a" style="left:822px;top:708px;font-size:12px;line-height:14px;letter-spacing:0.4px">-170.189</div>
<div class="a" style="left:874px;top:708px;font-size:12px;line-height:14px">)</div>
</body></html>
